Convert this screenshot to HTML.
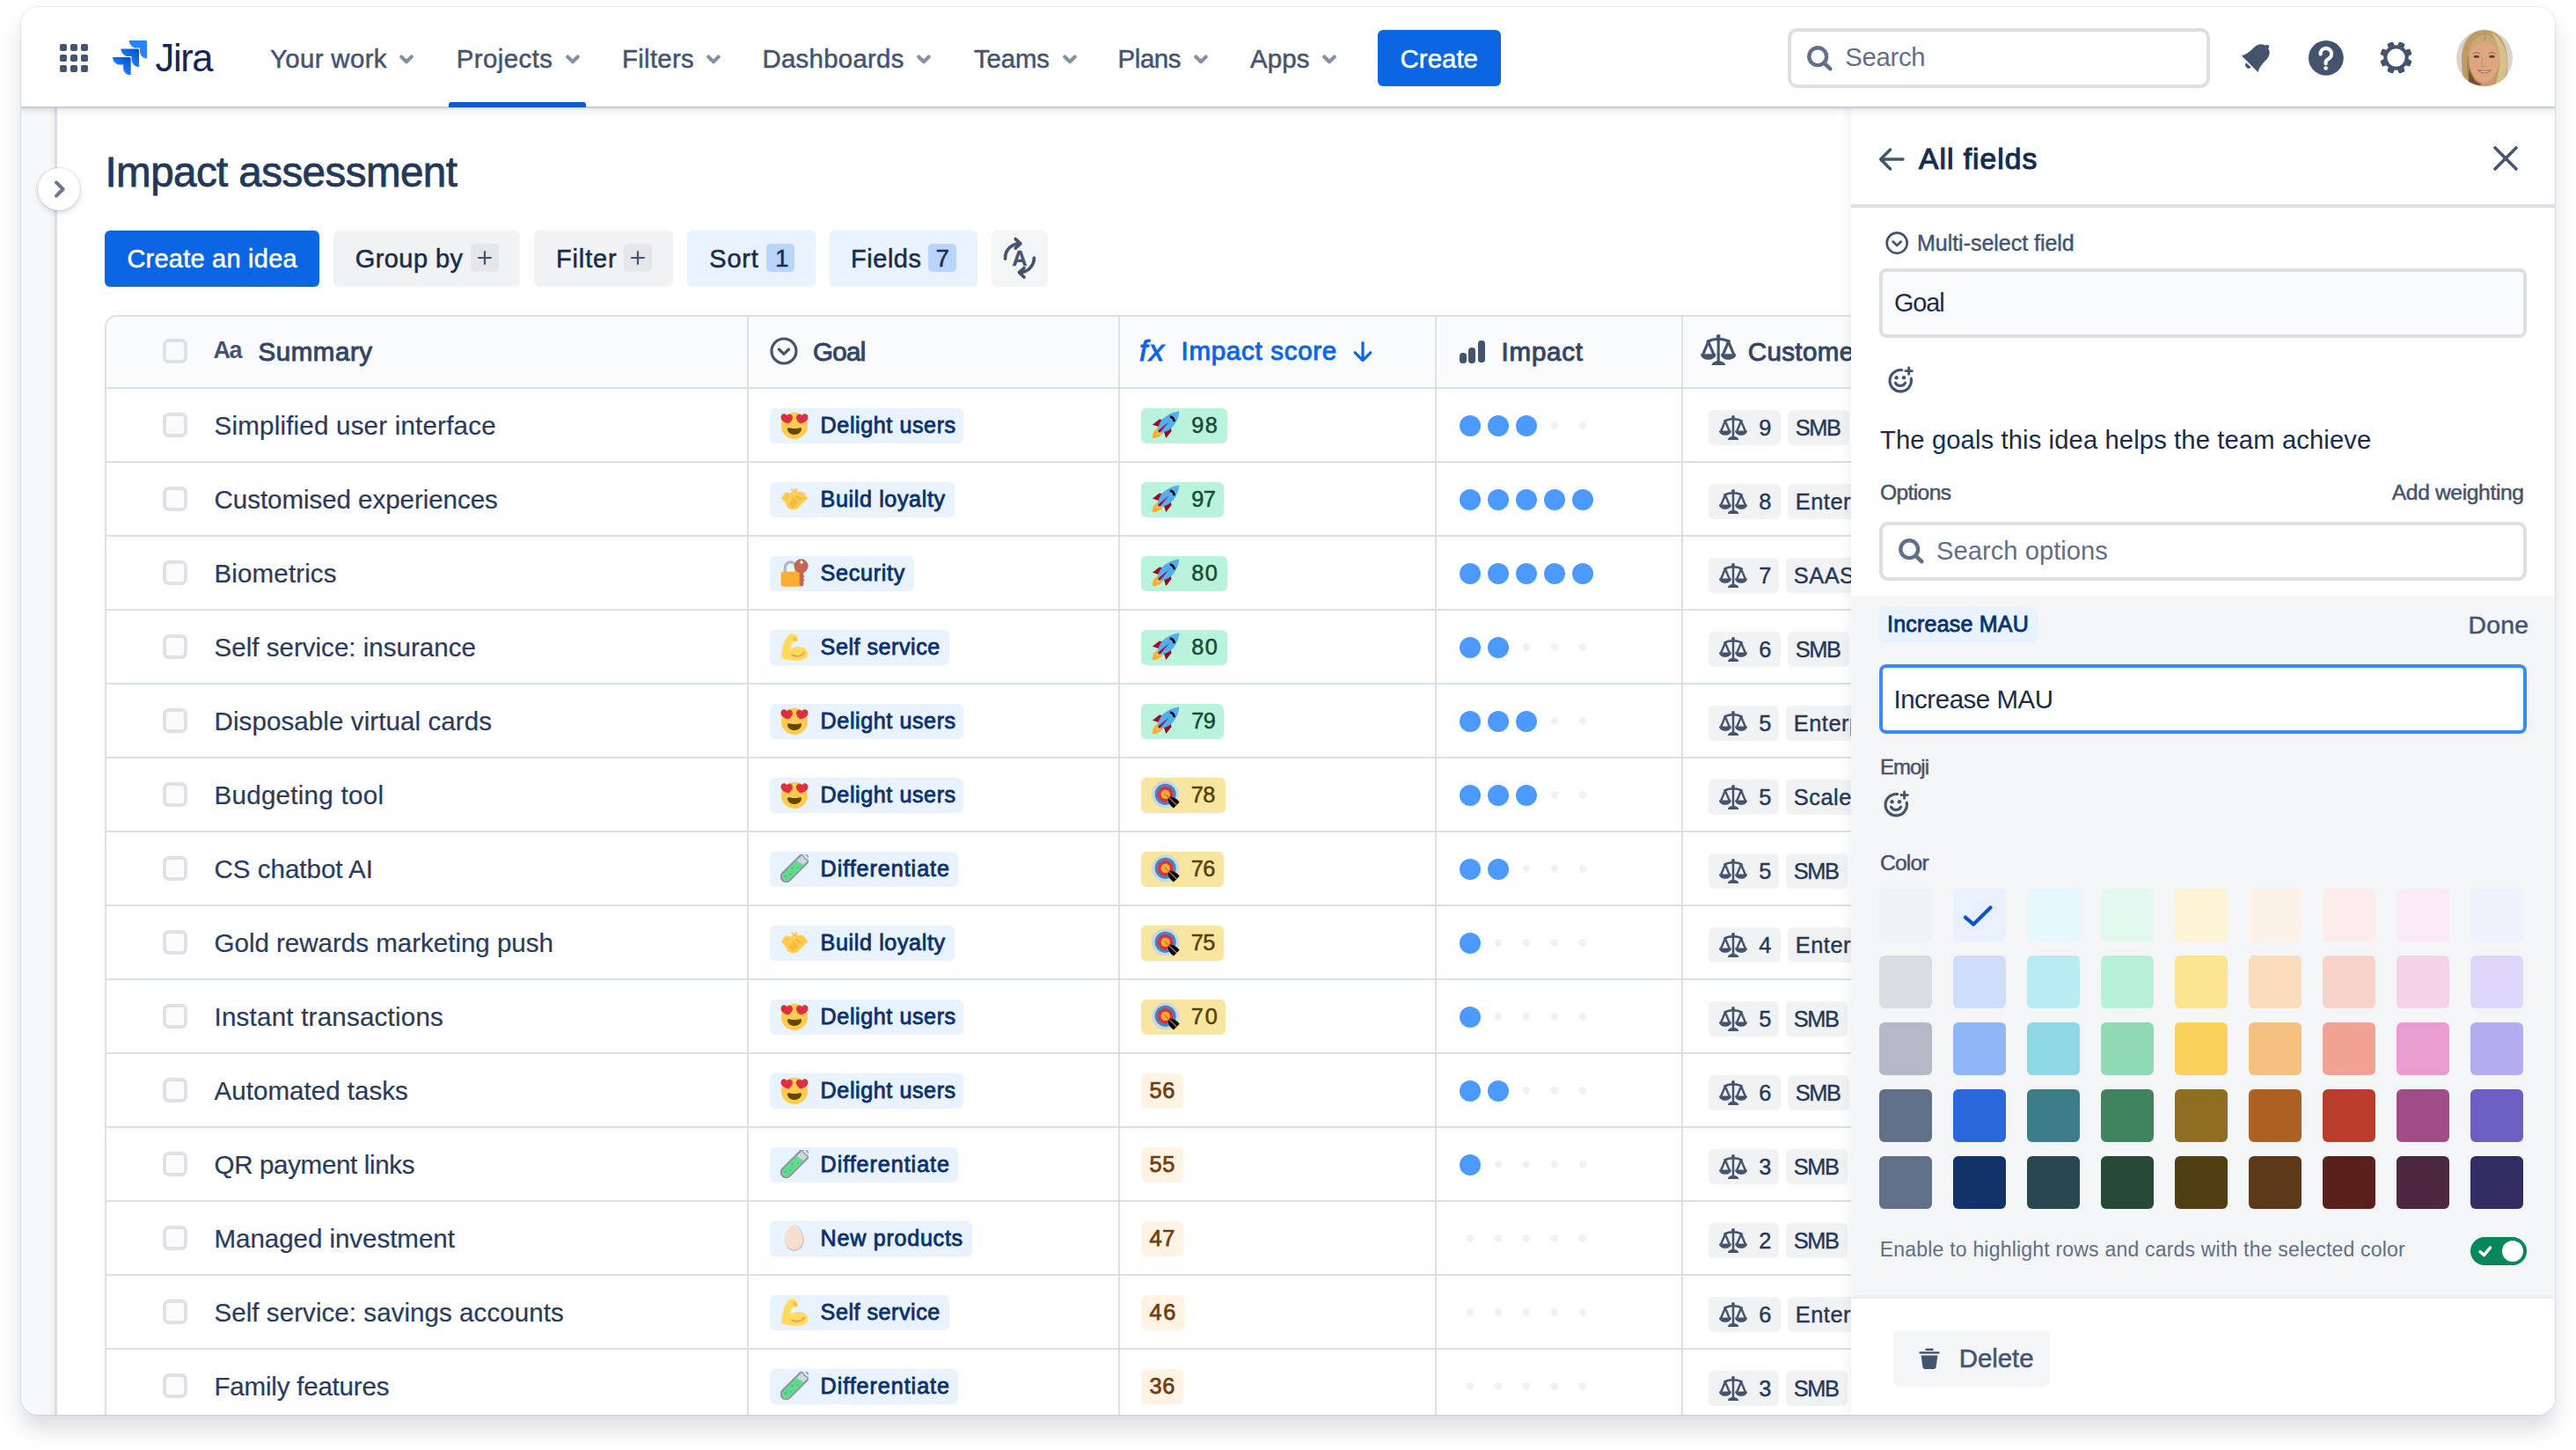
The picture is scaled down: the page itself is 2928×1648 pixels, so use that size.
<!DOCTYPE html>
<html lang="en"><head><meta charset="utf-8"><title>Impact assessment - Jira</title>
<style>
*{box-sizing:border-box;margin:0;padding:0}
h1,h2{font-weight:400;font-size:inherit}
html,body{width:2928px;height:1648px;background:#fff;overflow:hidden}
body{font-family:"Liberation Sans",Arial,sans-serif;color:#172B4D;position:relative}
.b{position:absolute;display:block}
.t{position:absolute;white-space:nowrap;display:block}
#win{position:absolute;left:24px;top:7.5px;width:2880px;height:1600px;border-radius:20px;background:#fff;overflow:hidden;}
#winshadow{position:absolute;left:24px;top:7.5px;width:2880px;height:1600px;border-radius:20px;box-shadow:0 16px 24px rgba(9,30,66,.15),0 0 2px rgba(9,30,66,.31);}
#shift{position:absolute;left:-24px;top:-7.5px;width:2928px;height:1648px}
.cb{position:absolute;width:28px;height:28px;border:4px solid #DFE1E6;border-radius:7px;background:#FAFBFC}
.tag{position:absolute;height:40px;border-radius:6px}
</style></head><body>
<div id="winshadow"></div><div id="win"><div id="shift">
<main>
<div class="b " style="left:24.0px;top:122.0px;width:39.0px;height:1486.0px;background:#F7F8F9;"></div>
<div class="b " style="left:56.0px;top:122.0px;width:7.0px;height:1486.0px;background:linear-gradient(90deg,rgba(9,30,66,0),rgba(9,30,66,.05))"></div>
<div class="b " style="left:62.2px;top:122.0px;width:2.6px;height:1486.0px;background:#DADDE5;"></div>
<div class="b " style="left:43.0px;top:191.0px;width:48.0px;height:48.0px;background:#fff;border-radius:24px;box-shadow:0 0 0 1px rgba(9,30,66,.10),0 3px 6px rgba(9,30,66,.16);"></div>
<svg class="b" style="left:58.0px;top:203.0px;" width="20.0" height="24.0" viewBox="0 0 20 24"><path d="M6 4.4 L13.6 12 L6 19.6" fill="none" stroke="#6B778C" stroke-width="4" stroke-linecap="round" stroke-linejoin="round"/></svg>
<h1><span class="t " style="left:119.5px;top:165.5px;font-size:47.6px;line-height:60px;color:#253858;letter-spacing:-0.60px;-webkit-text-stroke:0.80px #253858;">Impact assessment</span></h1>
<div class="b " style="left:119.0px;top:261.5px;width:244.0px;height:64.0px;background:#0C66E4;border-radius:6px;"></div>
<span class="t " style="left:144.4px;top:275.5px;font-size:29.0px;line-height:36px;color:#fff;letter-spacing:0.23px;-webkit-text-stroke:0.50px #fff;">Create an idea</span>
<div class="b " style="left:379.0px;top:261.5px;width:212.0px;height:64.0px;background:#F1F2F4;border-radius:6px;"></div>
<span class="t " style="left:403.7px;top:275.5px;font-size:29.0px;line-height:36px;color:#172B4D;letter-spacing:0.43px;-webkit-text-stroke:0.50px #172B4D;">Group by</span>
<div class="b " style="left:535.0px;top:277.4px;width:32.0px;height:32.0px;background:#E4E6EA;border-radius:5px;"></div>
<svg class="b" style="left:541.0px;top:283.4px;" width="20.0" height="20.0" viewBox="0 0 20 20"><path d="M10 3 V17 M3 10 H17" stroke="#44546F" stroke-width="2.2" stroke-linecap="round"/></svg>
<div class="b " style="left:607.0px;top:261.5px;width:158.0px;height:64.0px;background:#F1F2F4;border-radius:6px;"></div>
<span class="t " style="left:632.0px;top:275.5px;font-size:29.0px;line-height:36px;color:#172B4D;letter-spacing:0.85px;-webkit-text-stroke:0.50px #172B4D;">Filter</span>
<div class="b " style="left:709.0px;top:277.4px;width:32.0px;height:32.0px;background:#E4E6EA;border-radius:5px;"></div>
<svg class="b" style="left:715.0px;top:283.4px;" width="20.0" height="20.0" viewBox="0 0 20 20"><path d="M10 3 V17 M3 10 H17" stroke="#44546F" stroke-width="2.2" stroke-linecap="round"/></svg>
<div class="b " style="left:781.0px;top:261.5px;width:146.0px;height:64.0px;background:#E9F2FF;border-radius:6px;"></div>
<span class="t " style="left:806.3px;top:275.5px;font-size:29.0px;line-height:36px;color:#172B4D;letter-spacing:0.77px;-webkit-text-stroke:0.50px #172B4D;">Sort</span>
<div class="b " style="left:871.0px;top:277.4px;width:32.0px;height:32.0px;background:#B8D4FF;border-radius:5px;"></div>
<span class="t " style="left:881.0px;top:276.3px;font-size:28.0px;line-height:35px;color:#172B4D;-webkit-text-stroke:0.40px #172B4D;">1</span>
<div class="b " style="left:942.8px;top:261.5px;width:167.8px;height:64.0px;background:#E9F2FF;border-radius:6px;"></div>
<span class="t " style="left:967.0px;top:275.5px;font-size:29.0px;line-height:36px;color:#172B4D;letter-spacing:0.53px;-webkit-text-stroke:0.50px #172B4D;">Fields</span>
<div class="b " style="left:1055.0px;top:277.4px;width:32.0px;height:32.0px;background:#B8D4FF;border-radius:5px;"></div>
<span class="t " style="left:1063.5px;top:276.3px;font-size:28.0px;line-height:35px;color:#172B4D;-webkit-text-stroke:0.40px #172B4D;">7</span>
<div class="b " style="left:1127.0px;top:261.5px;width:64.0px;height:64.0px;background:#F4F5F7;border-radius:6px;"></div>
<svg class="b" style="left:1137.0px;top:268.0px;" width="44.0" height="54.0" viewBox="0 0 44 54"><g fill="none" stroke="#44546F" stroke-width="3.7" stroke-linecap="round" stroke-linejoin="round"><path d="M5.6 26.2 A16.4 16.4 0 0 1 22.4 8.8"/><path d="M17.2 3.7 L22.9 8.9 L17.2 14.1"/><path d="M38.4 25 A16.6 16.6 0 0 1 22 41.7"/><path d="M27 36.6 L21.5 41.7 L27 47"/></g><text x="22" y="33.7" text-anchor="middle" font-family="Liberation Sans,Arial,sans-serif" style="font-weight:700" font-size="23.5" fill="#44546F" stroke="#44546F" stroke-width="0.5">A</text></svg>
<section id="table">
<div class="b " style="left:119.0px;top:358.0px;width:2200.0px;height:1400.0px;background:#fff;border:2px solid #DCDFE4;border-radius:14px 0 0 0;"></div>
<div class="b " style="left:121.0px;top:360.0px;width:2198.0px;height:80.0px;background:#FAFBFC;border-radius:12px 0 0 0;"></div>
<div class="b " style="left:849.4px;top:360.0px;width:2.0px;height:1400.0px;background:#DCDFE4;"></div>
<div class="b " style="left:1271.0px;top:360.0px;width:2.0px;height:1400.0px;background:#DCDFE4;"></div>
<div class="b " style="left:1631.0px;top:360.0px;width:2.0px;height:1400.0px;background:#DCDFE4;"></div>
<div class="b " style="left:1911.0px;top:360.0px;width:2.0px;height:1400.0px;background:#DCDFE4;"></div>
<div class="b " style="left:121.0px;top:440.0px;width:2198.0px;height:2.0px;background:#DCDFE4;"></div>
<div class="b " style="left:121.0px;top:524.0px;width:2198.0px;height:2.0px;background:#DCDFE4;"></div>
<div class="b " style="left:121.0px;top:608.0px;width:2198.0px;height:2.0px;background:#DCDFE4;"></div>
<div class="b " style="left:121.0px;top:692.0px;width:2198.0px;height:2.0px;background:#DCDFE4;"></div>
<div class="b " style="left:121.0px;top:776.0px;width:2198.0px;height:2.0px;background:#DCDFE4;"></div>
<div class="b " style="left:121.0px;top:860.0px;width:2198.0px;height:2.0px;background:#DCDFE4;"></div>
<div class="b " style="left:121.0px;top:944.0px;width:2198.0px;height:2.0px;background:#DCDFE4;"></div>
<div class="b " style="left:121.0px;top:1028.0px;width:2198.0px;height:2.0px;background:#DCDFE4;"></div>
<div class="b " style="left:121.0px;top:1112.0px;width:2198.0px;height:2.0px;background:#DCDFE4;"></div>
<div class="b " style="left:121.0px;top:1196.0px;width:2198.0px;height:2.0px;background:#DCDFE4;"></div>
<div class="b " style="left:121.0px;top:1280.0px;width:2198.0px;height:2.0px;background:#DCDFE4;"></div>
<div class="b " style="left:121.0px;top:1364.0px;width:2198.0px;height:2.0px;background:#DCDFE4;"></div>
<div class="b " style="left:121.0px;top:1448.0px;width:2198.0px;height:2.0px;background:#DCDFE4;"></div>
<div class="b " style="left:121.0px;top:1532.0px;width:2198.0px;height:2.0px;background:#DCDFE4;"></div>
<div class="b " style="left:121.0px;top:1616.0px;width:2198.0px;height:2.0px;background:#DCDFE4;"></div>
<div class="cb" style="left:185px;top:385px"></div>
<span class="t " style="left:242.5px;top:381.1px;font-size:27.0px;line-height:34px;color:#44546F;letter-spacing:-1.52px;font-weight:700;">Aa</span>
<span class="t " style="left:293.5px;top:380.6px;font-size:29.5px;line-height:37px;color:#344563;letter-spacing:0.55px;-webkit-text-stroke:0.97px #344563;">Summary</span>
<svg class="b" style="left:874.8px;top:382.8px;" width="32.0" height="32.0" viewBox="0 0 32 32"><circle cx="16" cy="16" r="14" fill="none" stroke="#44546F" stroke-width="3.2"/><path d="M10.4 14 L16 19.4 L21.6 14" fill="none" stroke="#44546F" stroke-width="3.2" stroke-linecap="round" stroke-linejoin="round"/></svg>
<span class="t " style="left:924.0px;top:380.6px;font-size:29.5px;line-height:37px;color:#344563;letter-spacing:-0.64px;-webkit-text-stroke:0.97px #344563;">Goal</span>
<span class="t " style="left:1295.0px;top:376.8px;font-size:34.0px;line-height:42px;color:#0C66E4;letter-spacing:1.55px;font-style:italic;-webkit-text-stroke:1.00px #0C66E4;">fx</span>
<span class="t " style="left:1342.5px;top:380.3px;font-size:29.5px;line-height:37px;color:#0C66E4;letter-spacing:0.72px;-webkit-text-stroke:0.97px #0C66E4;">Impact score</span>
<svg class="b" style="left:1536.0px;top:385.5px;" width="26.0" height="28.0" viewBox="0 0 26 28"><path d="M13 3.6 V23.4 M4.2 14.8 L13 23.6 L21.8 14.8" fill="none" stroke="#0C66E4" stroke-width="3.2" stroke-linecap="round" stroke-linejoin="round"/></svg>
<div class="b " style="left:1659.0px;top:401.0px;width:8.0px;height:11.5px;background:#44546F;border-radius:3.5px;"></div>
<div class="b " style="left:1669.3px;top:394.6px;width:8.0px;height:18.0px;background:#44546F;border-radius:3.5px;"></div>
<div class="b " style="left:1679.6px;top:387.4px;width:8.0px;height:25.0px;background:#44546F;border-radius:3.5px;"></div>
<span class="t " style="left:1706.6px;top:380.6px;font-size:29.5px;line-height:37px;color:#344563;letter-spacing:0.77px;-webkit-text-stroke:0.97px #344563;">Impact</span>
<svg class="b" style="left:1932.6px;top:379.6px;" width="40.4" height="35.8" viewBox="0 0 32.2 28.4"><g fill="none" stroke="#44546F" stroke-width="2.5" stroke-linecap="round" stroke-linejoin="round"><path d="M16.1 2 V25.4"/><path d="M6.4 6.3 C9.6 4.7 12.8 4.1 16.1 4.1 C19.4 4.1 22.6 4.7 25.8 6.3"/><path d="M7 6.6 L2.2 18 M7 6.6 L11.8 18"/><path d="M25.2 6.6 L20.4 18 M25.2 6.6 L30 18"/></g><circle cx="16.1" cy="1.9" r="1.9" fill="#44546F"/><path d="M0 17.6 H14 C14 20.8 10.8 22.9 7 22.9 C3.2 22.9 0 20.8 0 17.6 Z" fill="#44546F"/><path d="M18.2 17.6 H32.2 C32.2 20.8 29 22.9 25.2 22.9 C21.4 22.9 18.2 20.8 18.2 17.6 Z" fill="#44546F"/><path d="M10 28.4 C10 25.6 12.8 24.1 16.1 24.1 C19.4 24.1 22.4 25.6 22.4 28.4 Z" fill="#44546F"/></svg>
<span class="t " style="left:1986.7px;top:380.6px;font-size:29.5px;line-height:37px;color:#344563;-webkit-text-stroke:0.97px #344563;letter-spacing:0.4px;">Customer segment</span>
<div class="row">
<div class="cb" style="left:185px;top:469.0px"></div>
<span class="t " style="left:243.5px;top:464.9px;font-size:29.6px;line-height:37px;color:#2A3B5B;letter-spacing:0.18px;-webkit-text-stroke:0.20px #2A3B5B;">Simplified user interface</span>
<div class="b " style="left:875.0px;top:463.5px;width:220.0px;height:40.0px;background:#E9F2FF;border-radius:6px;"></div>
<svg role="img" aria-label="😍" class="b" style="left:887.0px;top:467.1px;" width="32.0" height="32.0" viewBox="0 0 36 36"><circle cx="18" cy="19" r="17" fill="#FFCC4D"/><path d="M18 22.6c-3 0-5-.35-7.4-.82-.56-.1-1.64 0-1.64 1.64 0 3.28 3.76 7.0 9.04 7.0s9.04-3.72 9.04-7.0c0-1.64-1.08-1.75-1.64-1.64-2.4.47-4.4.82-7.4.82z" fill="#664500"/><path d="M16.2 4.6c-1.2-3.2-4.8-4.6-7.8-3.4-2.4.9-3.8 3.2-3.9 5.6-1.9-1.4-4.6-1.6-6.6 0" fill="none"/><path d="M9.6 16.4 C4.4 14.6 0.6 11.2 0.9 7.2 C1.1 4.4 3.6 2.6 6.1 3.3 C7.5 3.7 8.5 4.7 8.9 6 C9.9 5 11.3 4.3 12.8 4.7 C15.3 5.3 16.6 8.1 15.5 10.7 C14.4 13.3 12.2 15.2 9.6 16.4 Z" fill="#DD2E44" transform="rotate(-8 9 10)"/><path d="M26.4 16.4 C31.6 14.6 35.4 11.2 35.1 7.2 C34.9 4.4 32.4 2.6 29.9 3.3 C28.5 3.7 27.5 4.7 27.1 6 C26.1 5 24.7 4.3 23.2 4.7 C20.7 5.3 19.4 8.1 20.5 10.7 C21.6 13.3 23.8 15.2 26.4 16.4 Z" fill="#DD2E44" transform="rotate(8 27 10)"/></svg>
<span class="t " style="left:932.6px;top:467.0px;font-size:25.2px;line-height:32px;color:#09326C;letter-spacing:0.55px;-webkit-text-stroke:0.83px #09326C;">Delight users</span>
<div class="b " style="left:1297.0px;top:463.5px;width:98.0px;height:40.0px;background:#BAF3DB;border-radius:6px;"></div>
<svg role="img" aria-label="🚀" class="b" style="left:1309.4px;top:467.0px;" width="32.0" height="32.0" viewBox="0 0 36 36"><path d="M1 35 C0.6 29.6 3.4 23.6 8.6 21.6 L14.6 27.6 C12.4 32.6 6.6 35.4 1 35 Z" fill="#FFAC33"/><path d="M6.2 29.8 C6 26.6 7.6 23.6 10.4 22.4 L13.8 25.8 C12.6 28.6 9.4 30.2 6.2 29.8 Z" fill="#FFCC4D"/><path d="M1 17.6 L10 10.6 L16 12 L10 20.6 Z" fill="#A0041E"/><path d="M18.4 35 L25.4 26 L24 20 L15.4 26 Z" fill="#A0041E"/><path d="M35.4 0.6 C35.4 0.6 21.4 1.4 12.6 12.2 C8 17.8 7.6 24.2 8.6 27.4 C11.8 28.4 18.2 28 23.8 23.4 C34.6 14.6 35.4 0.6 35.4 0.6 Z" fill="#55ACEE"/><path d="M22.6 13.4 L8.4 25.4 C8.4 26.2 8.5 26.9 8.6 27.4 C9.1 27.5 9.8 27.6 10.6 27.6 Z" fill="#A0041E"/><path d="M23.4 7.4 C26.8 7.6 29 10.4 28.6 13.6" fill="none" stroke="#000" stroke-width="3" stroke-linecap="butt"/></svg>
<span class="t " style="left:1354.2px;top:467.3px;font-size:25.4px;line-height:32px;color:#164B35;letter-spacing:1.55px;-webkit-text-stroke:0.50px #164B35;">98</span>
<div class="b " style="left:1659.0px;top:471.5px;width:24.0px;height:24.0px;background:#4C9AFF;border-radius:12px;"></div>
<div class="b " style="left:1691.0px;top:471.5px;width:24.0px;height:24.0px;background:#4C9AFF;border-radius:12px;"></div>
<div class="b " style="left:1723.0px;top:471.5px;width:24.0px;height:24.0px;background:#4C9AFF;border-radius:12px;"></div>
<div class="b " style="left:1762.8px;top:479.3px;width:8.4px;height:8.4px;background:#F0F1F4;border-radius:5px;"></div>
<div class="b " style="left:1794.8px;top:479.3px;width:8.4px;height:8.4px;background:#F0F1F4;border-radius:5px;"></div>
<div class="b " style="left:1942.0px;top:466.0px;width:82.0px;height:40.0px;background:#F1F2F4;border-radius:6px;"></div>
<svg class="b" style="left:1954.0px;top:471.9px;" width="32.0" height="28.4" viewBox="0 0 32.2 28.4"><g fill="none" stroke="#44546F" stroke-width="2.5" stroke-linecap="round" stroke-linejoin="round"><path d="M16.1 2 V25.4"/><path d="M6.4 6.3 C9.6 4.7 12.8 4.1 16.1 4.1 C19.4 4.1 22.6 4.7 25.8 6.3"/><path d="M7 6.6 L2.2 18 M7 6.6 L11.8 18"/><path d="M25.2 6.6 L20.4 18 M25.2 6.6 L30 18"/></g><circle cx="16.1" cy="1.9" r="1.9" fill="#44546F"/><path d="M0 17.6 H14 C14 20.8 10.8 22.9 7 22.9 C3.2 22.9 0 20.8 0 17.6 Z" fill="#44546F"/><path d="M18.2 17.6 H32.2 C32.2 20.8 29 22.9 25.2 22.9 C21.4 22.9 18.2 20.8 18.2 17.6 Z" fill="#44546F"/><path d="M10 28.4 C10 25.6 12.8 24.1 16.1 24.1 C19.4 24.1 22.4 25.6 22.4 28.4 Z" fill="#44546F"/></svg>
<span class="t " style="left:1999.2px;top:469.7px;font-size:25.4px;line-height:32px;color:#253858;-webkit-text-stroke:0.40px #253858;">9</span>
<div class="b " style="left:2032.0px;top:466.0px;width:70.0px;height:40.0px;background:#F1F2F4;border-radius:6px;"></div>
<span class="t " style="left:2040.8px;top:469.7px;font-size:25.4px;line-height:32px;color:#253858;letter-spacing:-1.42px;-webkit-text-stroke:0.40px #253858;">SMB</span>
</div>
<div class="row">
<div class="cb" style="left:185px;top:553.0px"></div>
<span class="t " style="left:243.5px;top:548.9px;font-size:29.6px;line-height:37px;color:#2A3B5B;letter-spacing:-0.08px;-webkit-text-stroke:0.20px #2A3B5B;">Customised experiences</span>
<div class="b " style="left:875.0px;top:547.5px;width:210.0px;height:40.0px;background:#E9F2FF;border-radius:6px;"></div>
<svg role="img" aria-label="🤝" class="b" style="left:887.0px;top:551.1px;" width="32.0" height="32.0" viewBox="0 0 36 36"><path d="M1 17.5 L6.5 9.5 L13 11 L17 7.5 L21.5 9.5 L25 8.5 L30 9.8 L35.2 17.8 L30.5 21.5 L22 30.5 C21 31.6 19.6 31.8 18.6 31 C17.6 32 16 32.2 15 31.2 C13.8 31.8 12.4 31.4 11.8 30.2 C10.6 30.6 9.4 30 9 28.8 L5.5 22 Z" fill="#FFCC4D"/><path d="M15 4.2 L17.6 7.2 L20.2 3.8 L22 6 L20.4 9.6 L16 9.4 L13.6 6 Z" fill="#FFCC4D"/><path d="M18 12.4 L25.8 18.6 M14 21 L19 25.6 M12.4 24 L16.6 28 M16.4 18.4 L22 23.4" stroke="#F4A72A" stroke-width="1.5" stroke-linecap="round" fill="none"/><path d="M17.4 10.6 L20 12.6 L17.8 13.6 Z" fill="#E9F2FF"/></svg>
<span class="t " style="left:932.6px;top:551.0px;font-size:25.2px;line-height:32px;color:#09326C;letter-spacing:0.59px;-webkit-text-stroke:0.83px #09326C;">Build loyalty</span>
<div class="b " style="left:1297.0px;top:547.5px;width:94.0px;height:40.0px;background:#BAF3DB;border-radius:6px;"></div>
<svg role="img" aria-label="🚀" class="b" style="left:1309.4px;top:551.0px;" width="32.0" height="32.0" viewBox="0 0 36 36"><path d="M1 35 C0.6 29.6 3.4 23.6 8.6 21.6 L14.6 27.6 C12.4 32.6 6.6 35.4 1 35 Z" fill="#FFAC33"/><path d="M6.2 29.8 C6 26.6 7.6 23.6 10.4 22.4 L13.8 25.8 C12.6 28.6 9.4 30.2 6.2 29.8 Z" fill="#FFCC4D"/><path d="M1 17.6 L10 10.6 L16 12 L10 20.6 Z" fill="#A0041E"/><path d="M18.4 35 L25.4 26 L24 20 L15.4 26 Z" fill="#A0041E"/><path d="M35.4 0.6 C35.4 0.6 21.4 1.4 12.6 12.2 C8 17.8 7.6 24.2 8.6 27.4 C11.8 28.4 18.2 28 23.8 23.4 C34.6 14.6 35.4 0.6 35.4 0.6 Z" fill="#55ACEE"/><path d="M22.6 13.4 L8.4 25.4 C8.4 26.2 8.5 26.9 8.6 27.4 C9.1 27.5 9.8 27.6 10.6 27.6 Z" fill="#A0041E"/><path d="M23.4 7.4 C26.8 7.6 29 10.4 28.6 13.6" fill="none" stroke="#000" stroke-width="3" stroke-linecap="butt"/></svg>
<span class="t " style="left:1354.2px;top:551.3px;font-size:25.4px;line-height:32px;color:#164B35;letter-spacing:-0.45px;-webkit-text-stroke:0.50px #164B35;">97</span>
<div class="b " style="left:1659.0px;top:555.5px;width:24.0px;height:24.0px;background:#4C9AFF;border-radius:12px;"></div>
<div class="b " style="left:1691.0px;top:555.5px;width:24.0px;height:24.0px;background:#4C9AFF;border-radius:12px;"></div>
<div class="b " style="left:1723.0px;top:555.5px;width:24.0px;height:24.0px;background:#4C9AFF;border-radius:12px;"></div>
<div class="b " style="left:1755.0px;top:555.5px;width:24.0px;height:24.0px;background:#4C9AFF;border-radius:12px;"></div>
<div class="b " style="left:1787.0px;top:555.5px;width:24.0px;height:24.0px;background:#4C9AFF;border-radius:12px;"></div>
<div class="b " style="left:1942.0px;top:550.0px;width:82.0px;height:40.0px;background:#F1F2F4;border-radius:6px;"></div>
<svg class="b" style="left:1954.0px;top:555.9px;" width="32.0" height="28.4" viewBox="0 0 32.2 28.4"><g fill="none" stroke="#44546F" stroke-width="2.5" stroke-linecap="round" stroke-linejoin="round"><path d="M16.1 2 V25.4"/><path d="M6.4 6.3 C9.6 4.7 12.8 4.1 16.1 4.1 C19.4 4.1 22.6 4.7 25.8 6.3"/><path d="M7 6.6 L2.2 18 M7 6.6 L11.8 18"/><path d="M25.2 6.6 L20.4 18 M25.2 6.6 L30 18"/></g><circle cx="16.1" cy="1.9" r="1.9" fill="#44546F"/><path d="M0 17.6 H14 C14 20.8 10.8 22.9 7 22.9 C3.2 22.9 0 20.8 0 17.6 Z" fill="#44546F"/><path d="M18.2 17.6 H32.2 C32.2 20.8 29 22.9 25.2 22.9 C21.4 22.9 18.2 20.8 18.2 17.6 Z" fill="#44546F"/><path d="M10 28.4 C10 25.6 12.8 24.1 16.1 24.1 C19.4 24.1 22.4 25.6 22.4 28.4 Z" fill="#44546F"/></svg>
<span class="t " style="left:1999.2px;top:553.7px;font-size:25.4px;line-height:32px;color:#253858;-webkit-text-stroke:0.40px #253858;">8</span>
<div class="b " style="left:2032.0px;top:550.0px;width:200.0px;height:40.0px;background:#F1F2F4;border-radius:6px;"></div>
<span class="t " style="left:2040.8px;top:553.7px;font-size:25.4px;line-height:32px;color:#253858;-webkit-text-stroke:0.40px #253858;letter-spacing:0.5px;">Enterprise</span>
</div>
<div class="row">
<div class="cb" style="left:185px;top:637.0px"></div>
<span class="t " style="left:243.5px;top:632.9px;font-size:29.6px;line-height:37px;color:#2A3B5B;letter-spacing:0.10px;-webkit-text-stroke:0.20px #2A3B5B;">Biometrics</span>
<div class="b " style="left:875.0px;top:631.5px;width:164.0px;height:40.0px;background:#E9F2FF;border-radius:6px;"></div>
<svg role="img" aria-label="🔐" class="b" style="left:887.0px;top:635.1px;" width="32.0" height="32.0" viewBox="0 0 36 36"><path d="M6 17 V11.5 C6 7 9.2 4.4 13 4.4 C16.8 4.4 20 7 20 11.5 V17" fill="none" stroke="#AAB8C2" stroke-width="3.6"/><rect x="0.8" y="16.6" width="26" height="19" rx="3.2" fill="#FFAC33"/><circle cx="26.6" cy="9.4" r="9" fill="#C1694F"/><path d="M24.4 17 H29.6 V21.2 L31 22.4 L29.6 24 V26 L31 27.4 L29.6 29 V33.4 L27.4 35.6 L24.4 34 Z" fill="#C1694F"/><circle cx="27" cy="4.6" r="2" fill="#fff"/></svg>
<span class="t " style="left:932.6px;top:635.0px;font-size:25.2px;line-height:32px;color:#09326C;letter-spacing:0.68px;-webkit-text-stroke:0.83px #09326C;">Security</span>
<div class="b " style="left:1297.0px;top:631.5px;width:98.0px;height:40.0px;background:#BAF3DB;border-radius:6px;"></div>
<svg role="img" aria-label="🚀" class="b" style="left:1309.4px;top:635.0px;" width="32.0" height="32.0" viewBox="0 0 36 36"><path d="M1 35 C0.6 29.6 3.4 23.6 8.6 21.6 L14.6 27.6 C12.4 32.6 6.6 35.4 1 35 Z" fill="#FFAC33"/><path d="M6.2 29.8 C6 26.6 7.6 23.6 10.4 22.4 L13.8 25.8 C12.6 28.6 9.4 30.2 6.2 29.8 Z" fill="#FFCC4D"/><path d="M1 17.6 L10 10.6 L16 12 L10 20.6 Z" fill="#A0041E"/><path d="M18.4 35 L25.4 26 L24 20 L15.4 26 Z" fill="#A0041E"/><path d="M35.4 0.6 C35.4 0.6 21.4 1.4 12.6 12.2 C8 17.8 7.6 24.2 8.6 27.4 C11.8 28.4 18.2 28 23.8 23.4 C34.6 14.6 35.4 0.6 35.4 0.6 Z" fill="#55ACEE"/><path d="M22.6 13.4 L8.4 25.4 C8.4 26.2 8.5 26.9 8.6 27.4 C9.1 27.5 9.8 27.6 10.6 27.6 Z" fill="#A0041E"/><path d="M23.4 7.4 C26.8 7.6 29 10.4 28.6 13.6" fill="none" stroke="#000" stroke-width="3" stroke-linecap="butt"/></svg>
<span class="t " style="left:1354.2px;top:635.3px;font-size:25.4px;line-height:32px;color:#164B35;letter-spacing:1.55px;-webkit-text-stroke:0.50px #164B35;">80</span>
<div class="b " style="left:1659.0px;top:639.5px;width:24.0px;height:24.0px;background:#4C9AFF;border-radius:12px;"></div>
<div class="b " style="left:1691.0px;top:639.5px;width:24.0px;height:24.0px;background:#4C9AFF;border-radius:12px;"></div>
<div class="b " style="left:1723.0px;top:639.5px;width:24.0px;height:24.0px;background:#4C9AFF;border-radius:12px;"></div>
<div class="b " style="left:1755.0px;top:639.5px;width:24.0px;height:24.0px;background:#4C9AFF;border-radius:12px;"></div>
<div class="b " style="left:1787.0px;top:639.5px;width:24.0px;height:24.0px;background:#4C9AFF;border-radius:12px;"></div>
<div class="b " style="left:1942.0px;top:634.0px;width:80.0px;height:40.0px;background:#F1F2F4;border-radius:6px;"></div>
<svg class="b" style="left:1954.0px;top:639.9px;" width="32.0" height="28.4" viewBox="0 0 32.2 28.4"><g fill="none" stroke="#44546F" stroke-width="2.5" stroke-linecap="round" stroke-linejoin="round"><path d="M16.1 2 V25.4"/><path d="M6.4 6.3 C9.6 4.7 12.8 4.1 16.1 4.1 C19.4 4.1 22.6 4.7 25.8 6.3"/><path d="M7 6.6 L2.2 18 M7 6.6 L11.8 18"/><path d="M25.2 6.6 L20.4 18 M25.2 6.6 L30 18"/></g><circle cx="16.1" cy="1.9" r="1.9" fill="#44546F"/><path d="M0 17.6 H14 C14 20.8 10.8 22.9 7 22.9 C3.2 22.9 0 20.8 0 17.6 Z" fill="#44546F"/><path d="M18.2 17.6 H32.2 C32.2 20.8 29 22.9 25.2 22.9 C21.4 22.9 18.2 20.8 18.2 17.6 Z" fill="#44546F"/><path d="M10 28.4 C10 25.6 12.8 24.1 16.1 24.1 C19.4 24.1 22.4 25.6 22.4 28.4 Z" fill="#44546F"/></svg>
<span class="t " style="left:1999.2px;top:637.7px;font-size:25.4px;line-height:32px;color:#253858;-webkit-text-stroke:0.40px #253858;">7</span>
<div class="b " style="left:2030.0px;top:634.0px;width:200.0px;height:40.0px;background:#F1F2F4;border-radius:6px;"></div>
<span class="t " style="left:2038.8px;top:637.7px;font-size:25.4px;line-height:32px;color:#253858;-webkit-text-stroke:0.40px #253858;letter-spacing:0.5px;">SAAS</span>
</div>
<div class="row">
<div class="cb" style="left:185px;top:721.0px"></div>
<span class="t " style="left:243.5px;top:716.9px;font-size:29.6px;line-height:37px;color:#2A3B5B;letter-spacing:-0.01px;-webkit-text-stroke:0.20px #2A3B5B;">Self service: insurance</span>
<div class="b " style="left:875.0px;top:715.5px;width:204.0px;height:40.0px;background:#E9F2FF;border-radius:6px;"></div>
<svg role="img" aria-label="💪" class="b" style="left:887.0px;top:719.1px;" width="32.0" height="32.0" viewBox="0 0 36 36"><path d="M14.6 0.8 C17 1.6 19.6 2.6 21.4 4 C22.4 4.8 22.4 6 21.8 7 L22.6 9.2 L21.4 12.2 C20 12.4 18.4 12 17.2 11.2 C14.6 13 13 17 13.2 21.4 C16.4 18.6 21.4 17.4 26.4 18.2 C32 19.2 35.4 23 35.4 27.4 C35.4 32 31.6 34.8 26 35.4 C20 36 10 36.2 1.6 32.6 C1.2 24 3 13.6 8.2 6 C9.8 3.6 12 1.4 14.6 0.8 Z" fill="#FFDC5D"/><path d="M15 28.4 C19.6 31.6 27.6 30.6 30.6 25.2" fill="none" stroke="#EF9645" stroke-width="1.8" stroke-linecap="round"/><path d="M16.6 6.4 L19.8 7.4 M18 9.2 L20.6 9.4" stroke="#EF9645" stroke-width="1.2" stroke-linecap="round"/></svg>
<span class="t " style="left:932.6px;top:719.0px;font-size:25.2px;line-height:32px;color:#09326C;letter-spacing:0.50px;-webkit-text-stroke:0.83px #09326C;">Self service</span>
<div class="b " style="left:1297.0px;top:715.5px;width:98.0px;height:40.0px;background:#BAF3DB;border-radius:6px;"></div>
<svg role="img" aria-label="🚀" class="b" style="left:1309.4px;top:719.0px;" width="32.0" height="32.0" viewBox="0 0 36 36"><path d="M1 35 C0.6 29.6 3.4 23.6 8.6 21.6 L14.6 27.6 C12.4 32.6 6.6 35.4 1 35 Z" fill="#FFAC33"/><path d="M6.2 29.8 C6 26.6 7.6 23.6 10.4 22.4 L13.8 25.8 C12.6 28.6 9.4 30.2 6.2 29.8 Z" fill="#FFCC4D"/><path d="M1 17.6 L10 10.6 L16 12 L10 20.6 Z" fill="#A0041E"/><path d="M18.4 35 L25.4 26 L24 20 L15.4 26 Z" fill="#A0041E"/><path d="M35.4 0.6 C35.4 0.6 21.4 1.4 12.6 12.2 C8 17.8 7.6 24.2 8.6 27.4 C11.8 28.4 18.2 28 23.8 23.4 C34.6 14.6 35.4 0.6 35.4 0.6 Z" fill="#55ACEE"/><path d="M22.6 13.4 L8.4 25.4 C8.4 26.2 8.5 26.9 8.6 27.4 C9.1 27.5 9.8 27.6 10.6 27.6 Z" fill="#A0041E"/><path d="M23.4 7.4 C26.8 7.6 29 10.4 28.6 13.6" fill="none" stroke="#000" stroke-width="3" stroke-linecap="butt"/></svg>
<span class="t " style="left:1354.2px;top:719.3px;font-size:25.4px;line-height:32px;color:#164B35;letter-spacing:1.55px;-webkit-text-stroke:0.50px #164B35;">80</span>
<div class="b " style="left:1659.0px;top:723.5px;width:24.0px;height:24.0px;background:#4C9AFF;border-radius:12px;"></div>
<div class="b " style="left:1691.0px;top:723.5px;width:24.0px;height:24.0px;background:#4C9AFF;border-radius:12px;"></div>
<div class="b " style="left:1730.8px;top:731.3px;width:8.4px;height:8.4px;background:#F0F1F4;border-radius:5px;"></div>
<div class="b " style="left:1762.8px;top:731.3px;width:8.4px;height:8.4px;background:#F0F1F4;border-radius:5px;"></div>
<div class="b " style="left:1794.8px;top:731.3px;width:8.4px;height:8.4px;background:#F0F1F4;border-radius:5px;"></div>
<div class="b " style="left:1942.0px;top:718.0px;width:82.0px;height:40.0px;background:#F1F2F4;border-radius:6px;"></div>
<svg class="b" style="left:1954.0px;top:723.9px;" width="32.0" height="28.4" viewBox="0 0 32.2 28.4"><g fill="none" stroke="#44546F" stroke-width="2.5" stroke-linecap="round" stroke-linejoin="round"><path d="M16.1 2 V25.4"/><path d="M6.4 6.3 C9.6 4.7 12.8 4.1 16.1 4.1 C19.4 4.1 22.6 4.7 25.8 6.3"/><path d="M7 6.6 L2.2 18 M7 6.6 L11.8 18"/><path d="M25.2 6.6 L20.4 18 M25.2 6.6 L30 18"/></g><circle cx="16.1" cy="1.9" r="1.9" fill="#44546F"/><path d="M0 17.6 H14 C14 20.8 10.8 22.9 7 22.9 C3.2 22.9 0 20.8 0 17.6 Z" fill="#44546F"/><path d="M18.2 17.6 H32.2 C32.2 20.8 29 22.9 25.2 22.9 C21.4 22.9 18.2 20.8 18.2 17.6 Z" fill="#44546F"/><path d="M10 28.4 C10 25.6 12.8 24.1 16.1 24.1 C19.4 24.1 22.4 25.6 22.4 28.4 Z" fill="#44546F"/></svg>
<span class="t " style="left:1999.2px;top:721.7px;font-size:25.4px;line-height:32px;color:#253858;-webkit-text-stroke:0.40px #253858;">6</span>
<div class="b " style="left:2032.0px;top:718.0px;width:70.0px;height:40.0px;background:#F1F2F4;border-radius:6px;"></div>
<span class="t " style="left:2040.8px;top:721.7px;font-size:25.4px;line-height:32px;color:#253858;letter-spacing:-1.42px;-webkit-text-stroke:0.40px #253858;">SMB</span>
</div>
<div class="row">
<div class="cb" style="left:185px;top:805.0px"></div>
<span class="t " style="left:243.5px;top:800.9px;font-size:29.6px;line-height:37px;color:#2A3B5B;letter-spacing:0.06px;-webkit-text-stroke:0.20px #2A3B5B;">Disposable virtual cards</span>
<div class="b " style="left:875.0px;top:799.5px;width:220.0px;height:40.0px;background:#E9F2FF;border-radius:6px;"></div>
<svg role="img" aria-label="😍" class="b" style="left:887.0px;top:803.1px;" width="32.0" height="32.0" viewBox="0 0 36 36"><circle cx="18" cy="19" r="17" fill="#FFCC4D"/><path d="M18 22.6c-3 0-5-.35-7.4-.82-.56-.1-1.64 0-1.64 1.64 0 3.28 3.76 7.0 9.04 7.0s9.04-3.72 9.04-7.0c0-1.64-1.08-1.75-1.64-1.64-2.4.47-4.4.82-7.4.82z" fill="#664500"/><path d="M16.2 4.6c-1.2-3.2-4.8-4.6-7.8-3.4-2.4.9-3.8 3.2-3.9 5.6-1.9-1.4-4.6-1.6-6.6 0" fill="none"/><path d="M9.6 16.4 C4.4 14.6 0.6 11.2 0.9 7.2 C1.1 4.4 3.6 2.6 6.1 3.3 C7.5 3.7 8.5 4.7 8.9 6 C9.9 5 11.3 4.3 12.8 4.7 C15.3 5.3 16.6 8.1 15.5 10.7 C14.4 13.3 12.2 15.2 9.6 16.4 Z" fill="#DD2E44" transform="rotate(-8 9 10)"/><path d="M26.4 16.4 C31.6 14.6 35.4 11.2 35.1 7.2 C34.9 4.4 32.4 2.6 29.9 3.3 C28.5 3.7 27.5 4.7 27.1 6 C26.1 5 24.7 4.3 23.2 4.7 C20.7 5.3 19.4 8.1 20.5 10.7 C21.6 13.3 23.8 15.2 26.4 16.4 Z" fill="#DD2E44" transform="rotate(8 27 10)"/></svg>
<span class="t " style="left:932.6px;top:803.0px;font-size:25.2px;line-height:32px;color:#09326C;letter-spacing:0.55px;-webkit-text-stroke:0.83px #09326C;">Delight users</span>
<div class="b " style="left:1297.0px;top:799.5px;width:94.0px;height:40.0px;background:#BAF3DB;border-radius:6px;"></div>
<svg role="img" aria-label="🚀" class="b" style="left:1309.4px;top:803.0px;" width="32.0" height="32.0" viewBox="0 0 36 36"><path d="M1 35 C0.6 29.6 3.4 23.6 8.6 21.6 L14.6 27.6 C12.4 32.6 6.6 35.4 1 35 Z" fill="#FFAC33"/><path d="M6.2 29.8 C6 26.6 7.6 23.6 10.4 22.4 L13.8 25.8 C12.6 28.6 9.4 30.2 6.2 29.8 Z" fill="#FFCC4D"/><path d="M1 17.6 L10 10.6 L16 12 L10 20.6 Z" fill="#A0041E"/><path d="M18.4 35 L25.4 26 L24 20 L15.4 26 Z" fill="#A0041E"/><path d="M35.4 0.6 C35.4 0.6 21.4 1.4 12.6 12.2 C8 17.8 7.6 24.2 8.6 27.4 C11.8 28.4 18.2 28 23.8 23.4 C34.6 14.6 35.4 0.6 35.4 0.6 Z" fill="#55ACEE"/><path d="M22.6 13.4 L8.4 25.4 C8.4 26.2 8.5 26.9 8.6 27.4 C9.1 27.5 9.8 27.6 10.6 27.6 Z" fill="#A0041E"/><path d="M23.4 7.4 C26.8 7.6 29 10.4 28.6 13.6" fill="none" stroke="#000" stroke-width="3" stroke-linecap="butt"/></svg>
<span class="t " style="left:1354.2px;top:803.3px;font-size:25.4px;line-height:32px;color:#164B35;letter-spacing:-0.45px;-webkit-text-stroke:0.50px #164B35;">79</span>
<div class="b " style="left:1659.0px;top:807.5px;width:24.0px;height:24.0px;background:#4C9AFF;border-radius:12px;"></div>
<div class="b " style="left:1691.0px;top:807.5px;width:24.0px;height:24.0px;background:#4C9AFF;border-radius:12px;"></div>
<div class="b " style="left:1723.0px;top:807.5px;width:24.0px;height:24.0px;background:#4C9AFF;border-radius:12px;"></div>
<div class="b " style="left:1762.8px;top:815.3px;width:8.4px;height:8.4px;background:#F0F1F4;border-radius:5px;"></div>
<div class="b " style="left:1794.8px;top:815.3px;width:8.4px;height:8.4px;background:#F0F1F4;border-radius:5px;"></div>
<div class="b " style="left:1942.0px;top:802.0px;width:80.0px;height:40.0px;background:#F1F2F4;border-radius:6px;"></div>
<svg class="b" style="left:1954.0px;top:807.9px;" width="32.0" height="28.4" viewBox="0 0 32.2 28.4"><g fill="none" stroke="#44546F" stroke-width="2.5" stroke-linecap="round" stroke-linejoin="round"><path d="M16.1 2 V25.4"/><path d="M6.4 6.3 C9.6 4.7 12.8 4.1 16.1 4.1 C19.4 4.1 22.6 4.7 25.8 6.3"/><path d="M7 6.6 L2.2 18 M7 6.6 L11.8 18"/><path d="M25.2 6.6 L20.4 18 M25.2 6.6 L30 18"/></g><circle cx="16.1" cy="1.9" r="1.9" fill="#44546F"/><path d="M0 17.6 H14 C14 20.8 10.8 22.9 7 22.9 C3.2 22.9 0 20.8 0 17.6 Z" fill="#44546F"/><path d="M18.2 17.6 H32.2 C32.2 20.8 29 22.9 25.2 22.9 C21.4 22.9 18.2 20.8 18.2 17.6 Z" fill="#44546F"/><path d="M10 28.4 C10 25.6 12.8 24.1 16.1 24.1 C19.4 24.1 22.4 25.6 22.4 28.4 Z" fill="#44546F"/></svg>
<span class="t " style="left:1999.2px;top:805.7px;font-size:25.4px;line-height:32px;color:#253858;-webkit-text-stroke:0.40px #253858;">5</span>
<div class="b " style="left:2030.0px;top:802.0px;width:200.0px;height:40.0px;background:#F1F2F4;border-radius:6px;"></div>
<span class="t " style="left:2038.8px;top:805.7px;font-size:25.4px;line-height:32px;color:#253858;-webkit-text-stroke:0.40px #253858;letter-spacing:0.5px;">Enterprise</span>
</div>
<div class="row">
<div class="cb" style="left:185px;top:889.0px"></div>
<span class="t " style="left:243.5px;top:884.9px;font-size:29.6px;line-height:37px;color:#2A3B5B;letter-spacing:0.25px;-webkit-text-stroke:0.20px #2A3B5B;">Budgeting tool</span>
<div class="b " style="left:875.0px;top:883.5px;width:220.0px;height:40.0px;background:#E9F2FF;border-radius:6px;"></div>
<svg role="img" aria-label="😍" class="b" style="left:887.0px;top:887.1px;" width="32.0" height="32.0" viewBox="0 0 36 36"><circle cx="18" cy="19" r="17" fill="#FFCC4D"/><path d="M18 22.6c-3 0-5-.35-7.4-.82-.56-.1-1.64 0-1.64 1.64 0 3.28 3.76 7.0 9.04 7.0s9.04-3.72 9.04-7.0c0-1.64-1.08-1.75-1.64-1.64-2.4.47-4.4.82-7.4.82z" fill="#664500"/><path d="M16.2 4.6c-1.2-3.2-4.8-4.6-7.8-3.4-2.4.9-3.8 3.2-3.9 5.6-1.9-1.4-4.6-1.6-6.6 0" fill="none"/><path d="M9.6 16.4 C4.4 14.6 0.6 11.2 0.9 7.2 C1.1 4.4 3.6 2.6 6.1 3.3 C7.5 3.7 8.5 4.7 8.9 6 C9.9 5 11.3 4.3 12.8 4.7 C15.3 5.3 16.6 8.1 15.5 10.7 C14.4 13.3 12.2 15.2 9.6 16.4 Z" fill="#DD2E44" transform="rotate(-8 9 10)"/><path d="M26.4 16.4 C31.6 14.6 35.4 11.2 35.1 7.2 C34.9 4.4 32.4 2.6 29.9 3.3 C28.5 3.7 27.5 4.7 27.1 6 C26.1 5 24.7 4.3 23.2 4.7 C20.7 5.3 19.4 8.1 20.5 10.7 C21.6 13.3 23.8 15.2 26.4 16.4 Z" fill="#DD2E44" transform="rotate(8 27 10)"/></svg>
<span class="t " style="left:932.6px;top:887.0px;font-size:25.2px;line-height:32px;color:#09326C;letter-spacing:0.55px;-webkit-text-stroke:0.83px #09326C;">Delight users</span>
<div class="b " style="left:1297.0px;top:883.5px;width:96.0px;height:40.0px;background:#F8E6A0;border-radius:6px;"></div>
<svg role="img" aria-label="🎯" class="b" style="left:1309.0px;top:887.3px;" width="32.4" height="32.4" viewBox="0 0 36 36"><circle cx="17.4" cy="17.6" r="17.4" fill="#CCD6DD"/><circle cx="17.4" cy="17.6" r="13.4" fill="#3B88C3"/><circle cx="17.4" cy="17.6" r="9.8" fill="#DD2E44"/><circle cx="17.4" cy="17.6" r="5.8" fill="#FFAC33"/><path d="M22.4 21.2 C26 19.6 31.4 22.4 35.2 27.6 L31.6 31 Z M21.4 22.2 C19.8 25.8 22.6 31.2 27.8 35 L31.2 31.4 Z" fill="#000"/><path d="M16.6 16.8 L31.6 31.2" stroke="#C1694F" stroke-width="1.4" stroke-linecap="round"/></svg>
<span class="t " style="left:1353.8px;top:887.3px;font-size:25.4px;line-height:32px;color:#533F04;letter-spacing:-0.55px;-webkit-text-stroke:0.50px #533F04;">78</span>
<div class="b " style="left:1659.0px;top:891.5px;width:24.0px;height:24.0px;background:#4C9AFF;border-radius:12px;"></div>
<div class="b " style="left:1691.0px;top:891.5px;width:24.0px;height:24.0px;background:#4C9AFF;border-radius:12px;"></div>
<div class="b " style="left:1723.0px;top:891.5px;width:24.0px;height:24.0px;background:#4C9AFF;border-radius:12px;"></div>
<div class="b " style="left:1762.8px;top:899.3px;width:8.4px;height:8.4px;background:#F0F1F4;border-radius:5px;"></div>
<div class="b " style="left:1794.8px;top:899.3px;width:8.4px;height:8.4px;background:#F0F1F4;border-radius:5px;"></div>
<div class="b " style="left:1942.0px;top:886.0px;width:80.0px;height:40.0px;background:#F1F2F4;border-radius:6px;"></div>
<svg class="b" style="left:1954.0px;top:891.9px;" width="32.0" height="28.4" viewBox="0 0 32.2 28.4"><g fill="none" stroke="#44546F" stroke-width="2.5" stroke-linecap="round" stroke-linejoin="round"><path d="M16.1 2 V25.4"/><path d="M6.4 6.3 C9.6 4.7 12.8 4.1 16.1 4.1 C19.4 4.1 22.6 4.7 25.8 6.3"/><path d="M7 6.6 L2.2 18 M7 6.6 L11.8 18"/><path d="M25.2 6.6 L20.4 18 M25.2 6.6 L30 18"/></g><circle cx="16.1" cy="1.9" r="1.9" fill="#44546F"/><path d="M0 17.6 H14 C14 20.8 10.8 22.9 7 22.9 C3.2 22.9 0 20.8 0 17.6 Z" fill="#44546F"/><path d="M18.2 17.6 H32.2 C32.2 20.8 29 22.9 25.2 22.9 C21.4 22.9 18.2 20.8 18.2 17.6 Z" fill="#44546F"/><path d="M10 28.4 C10 25.6 12.8 24.1 16.1 24.1 C19.4 24.1 22.4 25.6 22.4 28.4 Z" fill="#44546F"/></svg>
<span class="t " style="left:1999.2px;top:889.7px;font-size:25.4px;line-height:32px;color:#253858;-webkit-text-stroke:0.40px #253858;">5</span>
<div class="b " style="left:2030.0px;top:886.0px;width:200.0px;height:40.0px;background:#F1F2F4;border-radius:6px;"></div>
<span class="t " style="left:2038.8px;top:889.7px;font-size:25.4px;line-height:32px;color:#253858;-webkit-text-stroke:0.40px #253858;letter-spacing:0.5px;">Scaleup</span>
</div>
<div class="row">
<div class="cb" style="left:185px;top:973.0px"></div>
<span class="t " style="left:243.5px;top:968.9px;font-size:29.6px;line-height:37px;color:#2A3B5B;letter-spacing:-0.04px;-webkit-text-stroke:0.20px #2A3B5B;">CS chatbot AI</span>
<div class="b " style="left:875.0px;top:967.5px;width:214.0px;height:40.0px;background:#E9F2FF;border-radius:6px;"></div>
<svg role="img" aria-label="🧪" class="b" style="left:887.0px;top:971.1px;" width="32.0" height="32.0" viewBox="0 0 36 36"><g transform="rotate(45 18 18)"><path d="M11.6 -3 H24.4 V33 C24.4 36.6 21.6 39.4 18 39.4 C14.4 39.4 11.6 36.6 11.6 33 Z" fill="#CCD6DD" stroke="#8899A6" stroke-width="2.6"/><path d="M13 9 L23 6.5 V33 C23 35.8 20.8 38 18 38 C15.2 38 13 35.8 13 33 Z" fill="#5DDB86"/><ellipse cx="18" cy="-3" rx="6.4" ry="2.2" fill="#E1E8ED" stroke="#8899A6" stroke-width="1.6"/><circle cx="16" cy="20" r="1.1" fill="#3CB371"/><circle cx="20" cy="27" r="1.1" fill="#3CB371"/><circle cx="17" cy="33" r="1.1" fill="#3CB371"/><circle cx="20.4" cy="14" r="0.9" fill="#3CB371"/></g></svg>
<span class="t " style="left:932.6px;top:971.0px;font-size:25.2px;line-height:32px;color:#09326C;letter-spacing:0.92px;-webkit-text-stroke:0.83px #09326C;">Differentiate</span>
<div class="b " style="left:1297.0px;top:967.5px;width:94.0px;height:40.0px;background:#F8E6A0;border-radius:6px;"></div>
<svg role="img" aria-label="🎯" class="b" style="left:1309.0px;top:971.3px;" width="32.4" height="32.4" viewBox="0 0 36 36"><circle cx="17.4" cy="17.6" r="17.4" fill="#CCD6DD"/><circle cx="17.4" cy="17.6" r="13.4" fill="#3B88C3"/><circle cx="17.4" cy="17.6" r="9.8" fill="#DD2E44"/><circle cx="17.4" cy="17.6" r="5.8" fill="#FFAC33"/><path d="M22.4 21.2 C26 19.6 31.4 22.4 35.2 27.6 L31.6 31 Z M21.4 22.2 C19.8 25.8 22.6 31.2 27.8 35 L31.2 31.4 Z" fill="#000"/><path d="M16.6 16.8 L31.6 31.2" stroke="#C1694F" stroke-width="1.4" stroke-linecap="round"/></svg>
<span class="t " style="left:1353.8px;top:971.3px;font-size:25.4px;line-height:32px;color:#533F04;letter-spacing:-0.55px;-webkit-text-stroke:0.50px #533F04;">76</span>
<div class="b " style="left:1659.0px;top:975.5px;width:24.0px;height:24.0px;background:#4C9AFF;border-radius:12px;"></div>
<div class="b " style="left:1691.0px;top:975.5px;width:24.0px;height:24.0px;background:#4C9AFF;border-radius:12px;"></div>
<div class="b " style="left:1730.8px;top:983.3px;width:8.4px;height:8.4px;background:#F0F1F4;border-radius:5px;"></div>
<div class="b " style="left:1762.8px;top:983.3px;width:8.4px;height:8.4px;background:#F0F1F4;border-radius:5px;"></div>
<div class="b " style="left:1794.8px;top:983.3px;width:8.4px;height:8.4px;background:#F0F1F4;border-radius:5px;"></div>
<div class="b " style="left:1942.0px;top:970.0px;width:80.0px;height:40.0px;background:#F1F2F4;border-radius:6px;"></div>
<svg class="b" style="left:1954.0px;top:975.9px;" width="32.0" height="28.4" viewBox="0 0 32.2 28.4"><g fill="none" stroke="#44546F" stroke-width="2.5" stroke-linecap="round" stroke-linejoin="round"><path d="M16.1 2 V25.4"/><path d="M6.4 6.3 C9.6 4.7 12.8 4.1 16.1 4.1 C19.4 4.1 22.6 4.7 25.8 6.3"/><path d="M7 6.6 L2.2 18 M7 6.6 L11.8 18"/><path d="M25.2 6.6 L20.4 18 M25.2 6.6 L30 18"/></g><circle cx="16.1" cy="1.9" r="1.9" fill="#44546F"/><path d="M0 17.6 H14 C14 20.8 10.8 22.9 7 22.9 C3.2 22.9 0 20.8 0 17.6 Z" fill="#44546F"/><path d="M18.2 17.6 H32.2 C32.2 20.8 29 22.9 25.2 22.9 C21.4 22.9 18.2 20.8 18.2 17.6 Z" fill="#44546F"/><path d="M10 28.4 C10 25.6 12.8 24.1 16.1 24.1 C19.4 24.1 22.4 25.6 22.4 28.4 Z" fill="#44546F"/></svg>
<span class="t " style="left:1999.2px;top:973.7px;font-size:25.4px;line-height:32px;color:#253858;-webkit-text-stroke:0.40px #253858;">5</span>
<div class="b " style="left:2030.0px;top:970.0px;width:70.0px;height:40.0px;background:#F1F2F4;border-radius:6px;"></div>
<span class="t " style="left:2038.8px;top:973.7px;font-size:25.4px;line-height:32px;color:#253858;letter-spacing:-1.42px;-webkit-text-stroke:0.40px #253858;">SMB</span>
</div>
<div class="row">
<div class="cb" style="left:185px;top:1057.0px"></div>
<span class="t " style="left:243.5px;top:1052.9px;font-size:29.6px;line-height:37px;color:#2A3B5B;letter-spacing:-0.04px;-webkit-text-stroke:0.20px #2A3B5B;">Gold rewards marketing push</span>
<div class="b " style="left:875.0px;top:1051.5px;width:210.0px;height:40.0px;background:#E9F2FF;border-radius:6px;"></div>
<svg role="img" aria-label="🤝" class="b" style="left:887.0px;top:1055.1px;" width="32.0" height="32.0" viewBox="0 0 36 36"><path d="M1 17.5 L6.5 9.5 L13 11 L17 7.5 L21.5 9.5 L25 8.5 L30 9.8 L35.2 17.8 L30.5 21.5 L22 30.5 C21 31.6 19.6 31.8 18.6 31 C17.6 32 16 32.2 15 31.2 C13.8 31.8 12.4 31.4 11.8 30.2 C10.6 30.6 9.4 30 9 28.8 L5.5 22 Z" fill="#FFCC4D"/><path d="M15 4.2 L17.6 7.2 L20.2 3.8 L22 6 L20.4 9.6 L16 9.4 L13.6 6 Z" fill="#FFCC4D"/><path d="M18 12.4 L25.8 18.6 M14 21 L19 25.6 M12.4 24 L16.6 28 M16.4 18.4 L22 23.4" stroke="#F4A72A" stroke-width="1.5" stroke-linecap="round" fill="none"/><path d="M17.4 10.6 L20 12.6 L17.8 13.6 Z" fill="#E9F2FF"/></svg>
<span class="t " style="left:932.6px;top:1055.0px;font-size:25.2px;line-height:32px;color:#09326C;letter-spacing:0.59px;-webkit-text-stroke:0.83px #09326C;">Build loyalty</span>
<div class="b " style="left:1297.0px;top:1051.5px;width:94.0px;height:40.0px;background:#F8E6A0;border-radius:6px;"></div>
<svg role="img" aria-label="🎯" class="b" style="left:1309.0px;top:1055.3px;" width="32.4" height="32.4" viewBox="0 0 36 36"><circle cx="17.4" cy="17.6" r="17.4" fill="#CCD6DD"/><circle cx="17.4" cy="17.6" r="13.4" fill="#3B88C3"/><circle cx="17.4" cy="17.6" r="9.8" fill="#DD2E44"/><circle cx="17.4" cy="17.6" r="5.8" fill="#FFAC33"/><path d="M22.4 21.2 C26 19.6 31.4 22.4 35.2 27.6 L31.6 31 Z M21.4 22.2 C19.8 25.8 22.6 31.2 27.8 35 L31.2 31.4 Z" fill="#000"/><path d="M16.6 16.8 L31.6 31.2" stroke="#C1694F" stroke-width="1.4" stroke-linecap="round"/></svg>
<span class="t " style="left:1353.8px;top:1055.3px;font-size:25.4px;line-height:32px;color:#533F04;letter-spacing:-0.55px;-webkit-text-stroke:0.50px #533F04;">75</span>
<div class="b " style="left:1659.0px;top:1059.5px;width:24.0px;height:24.0px;background:#4C9AFF;border-radius:12px;"></div>
<div class="b " style="left:1698.8px;top:1067.3px;width:8.4px;height:8.4px;background:#F0F1F4;border-radius:5px;"></div>
<div class="b " style="left:1730.8px;top:1067.3px;width:8.4px;height:8.4px;background:#F0F1F4;border-radius:5px;"></div>
<div class="b " style="left:1762.8px;top:1067.3px;width:8.4px;height:8.4px;background:#F0F1F4;border-radius:5px;"></div>
<div class="b " style="left:1794.8px;top:1067.3px;width:8.4px;height:8.4px;background:#F0F1F4;border-radius:5px;"></div>
<div class="b " style="left:1942.0px;top:1054.0px;width:82.0px;height:40.0px;background:#F1F2F4;border-radius:6px;"></div>
<svg class="b" style="left:1954.0px;top:1059.9px;" width="32.0" height="28.4" viewBox="0 0 32.2 28.4"><g fill="none" stroke="#44546F" stroke-width="2.5" stroke-linecap="round" stroke-linejoin="round"><path d="M16.1 2 V25.4"/><path d="M6.4 6.3 C9.6 4.7 12.8 4.1 16.1 4.1 C19.4 4.1 22.6 4.7 25.8 6.3"/><path d="M7 6.6 L2.2 18 M7 6.6 L11.8 18"/><path d="M25.2 6.6 L20.4 18 M25.2 6.6 L30 18"/></g><circle cx="16.1" cy="1.9" r="1.9" fill="#44546F"/><path d="M0 17.6 H14 C14 20.8 10.8 22.9 7 22.9 C3.2 22.9 0 20.8 0 17.6 Z" fill="#44546F"/><path d="M18.2 17.6 H32.2 C32.2 20.8 29 22.9 25.2 22.9 C21.4 22.9 18.2 20.8 18.2 17.6 Z" fill="#44546F"/><path d="M10 28.4 C10 25.6 12.8 24.1 16.1 24.1 C19.4 24.1 22.4 25.6 22.4 28.4 Z" fill="#44546F"/></svg>
<span class="t " style="left:1999.2px;top:1057.7px;font-size:25.4px;line-height:32px;color:#253858;-webkit-text-stroke:0.40px #253858;">4</span>
<div class="b " style="left:2032.0px;top:1054.0px;width:200.0px;height:40.0px;background:#F1F2F4;border-radius:6px;"></div>
<span class="t " style="left:2040.8px;top:1057.7px;font-size:25.4px;line-height:32px;color:#253858;-webkit-text-stroke:0.40px #253858;letter-spacing:0.5px;">Enterprise</span>
</div>
<div class="row">
<div class="cb" style="left:185px;top:1141.0px"></div>
<span class="t " style="left:243.5px;top:1136.9px;font-size:29.6px;line-height:37px;color:#2A3B5B;letter-spacing:0.20px;-webkit-text-stroke:0.20px #2A3B5B;">Instant transactions</span>
<div class="b " style="left:875.0px;top:1135.5px;width:220.0px;height:40.0px;background:#E9F2FF;border-radius:6px;"></div>
<svg role="img" aria-label="😍" class="b" style="left:887.0px;top:1139.1px;" width="32.0" height="32.0" viewBox="0 0 36 36"><circle cx="18" cy="19" r="17" fill="#FFCC4D"/><path d="M18 22.6c-3 0-5-.35-7.4-.82-.56-.1-1.64 0-1.64 1.64 0 3.28 3.76 7.0 9.04 7.0s9.04-3.72 9.04-7.0c0-1.64-1.08-1.75-1.64-1.64-2.4.47-4.4.82-7.4.82z" fill="#664500"/><path d="M16.2 4.6c-1.2-3.2-4.8-4.6-7.8-3.4-2.4.9-3.8 3.2-3.9 5.6-1.9-1.4-4.6-1.6-6.6 0" fill="none"/><path d="M9.6 16.4 C4.4 14.6 0.6 11.2 0.9 7.2 C1.1 4.4 3.6 2.6 6.1 3.3 C7.5 3.7 8.5 4.7 8.9 6 C9.9 5 11.3 4.3 12.8 4.7 C15.3 5.3 16.6 8.1 15.5 10.7 C14.4 13.3 12.2 15.2 9.6 16.4 Z" fill="#DD2E44" transform="rotate(-8 9 10)"/><path d="M26.4 16.4 C31.6 14.6 35.4 11.2 35.1 7.2 C34.9 4.4 32.4 2.6 29.9 3.3 C28.5 3.7 27.5 4.7 27.1 6 C26.1 5 24.7 4.3 23.2 4.7 C20.7 5.3 19.4 8.1 20.5 10.7 C21.6 13.3 23.8 15.2 26.4 16.4 Z" fill="#DD2E44" transform="rotate(8 27 10)"/></svg>
<span class="t " style="left:932.6px;top:1139.0px;font-size:25.2px;line-height:32px;color:#09326C;letter-spacing:0.55px;-webkit-text-stroke:0.83px #09326C;">Delight users</span>
<div class="b " style="left:1297.0px;top:1135.5px;width:96.0px;height:40.0px;background:#F8E6A0;border-radius:6px;"></div>
<svg role="img" aria-label="🎯" class="b" style="left:1309.0px;top:1139.3px;" width="32.4" height="32.4" viewBox="0 0 36 36"><circle cx="17.4" cy="17.6" r="17.4" fill="#CCD6DD"/><circle cx="17.4" cy="17.6" r="13.4" fill="#3B88C3"/><circle cx="17.4" cy="17.6" r="9.8" fill="#DD2E44"/><circle cx="17.4" cy="17.6" r="5.8" fill="#FFAC33"/><path d="M22.4 21.2 C26 19.6 31.4 22.4 35.2 27.6 L31.6 31 Z M21.4 22.2 C19.8 25.8 22.6 31.2 27.8 35 L31.2 31.4 Z" fill="#000"/><path d="M16.6 16.8 L31.6 31.2" stroke="#C1694F" stroke-width="1.4" stroke-linecap="round"/></svg>
<span class="t " style="left:1353.8px;top:1139.3px;font-size:25.4px;line-height:32px;color:#533F04;letter-spacing:1.95px;-webkit-text-stroke:0.50px #533F04;">70</span>
<div class="b " style="left:1659.0px;top:1143.5px;width:24.0px;height:24.0px;background:#4C9AFF;border-radius:12px;"></div>
<div class="b " style="left:1698.8px;top:1151.3px;width:8.4px;height:8.4px;background:#F0F1F4;border-radius:5px;"></div>
<div class="b " style="left:1730.8px;top:1151.3px;width:8.4px;height:8.4px;background:#F0F1F4;border-radius:5px;"></div>
<div class="b " style="left:1762.8px;top:1151.3px;width:8.4px;height:8.4px;background:#F0F1F4;border-radius:5px;"></div>
<div class="b " style="left:1794.8px;top:1151.3px;width:8.4px;height:8.4px;background:#F0F1F4;border-radius:5px;"></div>
<div class="b " style="left:1942.0px;top:1138.0px;width:80.0px;height:40.0px;background:#F1F2F4;border-radius:6px;"></div>
<svg class="b" style="left:1954.0px;top:1143.9px;" width="32.0" height="28.4" viewBox="0 0 32.2 28.4"><g fill="none" stroke="#44546F" stroke-width="2.5" stroke-linecap="round" stroke-linejoin="round"><path d="M16.1 2 V25.4"/><path d="M6.4 6.3 C9.6 4.7 12.8 4.1 16.1 4.1 C19.4 4.1 22.6 4.7 25.8 6.3"/><path d="M7 6.6 L2.2 18 M7 6.6 L11.8 18"/><path d="M25.2 6.6 L20.4 18 M25.2 6.6 L30 18"/></g><circle cx="16.1" cy="1.9" r="1.9" fill="#44546F"/><path d="M0 17.6 H14 C14 20.8 10.8 22.9 7 22.9 C3.2 22.9 0 20.8 0 17.6 Z" fill="#44546F"/><path d="M18.2 17.6 H32.2 C32.2 20.8 29 22.9 25.2 22.9 C21.4 22.9 18.2 20.8 18.2 17.6 Z" fill="#44546F"/><path d="M10 28.4 C10 25.6 12.8 24.1 16.1 24.1 C19.4 24.1 22.4 25.6 22.4 28.4 Z" fill="#44546F"/></svg>
<span class="t " style="left:1999.2px;top:1141.7px;font-size:25.4px;line-height:32px;color:#253858;-webkit-text-stroke:0.40px #253858;">5</span>
<div class="b " style="left:2030.0px;top:1138.0px;width:70.0px;height:40.0px;background:#F1F2F4;border-radius:6px;"></div>
<span class="t " style="left:2038.8px;top:1141.7px;font-size:25.4px;line-height:32px;color:#253858;letter-spacing:-1.42px;-webkit-text-stroke:0.40px #253858;">SMB</span>
</div>
<div class="row">
<div class="cb" style="left:185px;top:1225.0px"></div>
<span class="t " style="left:243.5px;top:1220.9px;font-size:29.6px;line-height:37px;color:#2A3B5B;letter-spacing:0.00px;-webkit-text-stroke:0.20px #2A3B5B;">Automated tasks</span>
<div class="b " style="left:875.0px;top:1219.5px;width:220.0px;height:40.0px;background:#E9F2FF;border-radius:6px;"></div>
<svg role="img" aria-label="😍" class="b" style="left:887.0px;top:1223.1px;" width="32.0" height="32.0" viewBox="0 0 36 36"><circle cx="18" cy="19" r="17" fill="#FFCC4D"/><path d="M18 22.6c-3 0-5-.35-7.4-.82-.56-.1-1.64 0-1.64 1.64 0 3.28 3.76 7.0 9.04 7.0s9.04-3.72 9.04-7.0c0-1.64-1.08-1.75-1.64-1.64-2.4.47-4.4.82-7.4.82z" fill="#664500"/><path d="M16.2 4.6c-1.2-3.2-4.8-4.6-7.8-3.4-2.4.9-3.8 3.2-3.9 5.6-1.9-1.4-4.6-1.6-6.6 0" fill="none"/><path d="M9.6 16.4 C4.4 14.6 0.6 11.2 0.9 7.2 C1.1 4.4 3.6 2.6 6.1 3.3 C7.5 3.7 8.5 4.7 8.9 6 C9.9 5 11.3 4.3 12.8 4.7 C15.3 5.3 16.6 8.1 15.5 10.7 C14.4 13.3 12.2 15.2 9.6 16.4 Z" fill="#DD2E44" transform="rotate(-8 9 10)"/><path d="M26.4 16.4 C31.6 14.6 35.4 11.2 35.1 7.2 C34.9 4.4 32.4 2.6 29.9 3.3 C28.5 3.7 27.5 4.7 27.1 6 C26.1 5 24.7 4.3 23.2 4.7 C20.7 5.3 19.4 8.1 20.5 10.7 C21.6 13.3 23.8 15.2 26.4 16.4 Z" fill="#DD2E44" transform="rotate(8 27 10)"/></svg>
<span class="t " style="left:932.6px;top:1223.0px;font-size:25.2px;line-height:32px;color:#09326C;letter-spacing:0.55px;-webkit-text-stroke:0.83px #09326C;">Delight users</span>
<div class="b " style="left:1297.0px;top:1219.5px;width:48.0px;height:40.0px;background:#FFF3E4;border-radius:6px;"></div>
<span class="t " style="left:1306.6px;top:1223.3px;font-size:25.4px;line-height:32px;color:#703E0E;letter-spacing:0.55px;-webkit-text-stroke:0.75px #703E0E;">56</span>
<div class="b " style="left:1659.0px;top:1227.5px;width:24.0px;height:24.0px;background:#4C9AFF;border-radius:12px;"></div>
<div class="b " style="left:1691.0px;top:1227.5px;width:24.0px;height:24.0px;background:#4C9AFF;border-radius:12px;"></div>
<div class="b " style="left:1730.8px;top:1235.3px;width:8.4px;height:8.4px;background:#F0F1F4;border-radius:5px;"></div>
<div class="b " style="left:1762.8px;top:1235.3px;width:8.4px;height:8.4px;background:#F0F1F4;border-radius:5px;"></div>
<div class="b " style="left:1794.8px;top:1235.3px;width:8.4px;height:8.4px;background:#F0F1F4;border-radius:5px;"></div>
<div class="b " style="left:1942.0px;top:1222.0px;width:82.0px;height:40.0px;background:#F1F2F4;border-radius:6px;"></div>
<svg class="b" style="left:1954.0px;top:1227.9px;" width="32.0" height="28.4" viewBox="0 0 32.2 28.4"><g fill="none" stroke="#44546F" stroke-width="2.5" stroke-linecap="round" stroke-linejoin="round"><path d="M16.1 2 V25.4"/><path d="M6.4 6.3 C9.6 4.7 12.8 4.1 16.1 4.1 C19.4 4.1 22.6 4.7 25.8 6.3"/><path d="M7 6.6 L2.2 18 M7 6.6 L11.8 18"/><path d="M25.2 6.6 L20.4 18 M25.2 6.6 L30 18"/></g><circle cx="16.1" cy="1.9" r="1.9" fill="#44546F"/><path d="M0 17.6 H14 C14 20.8 10.8 22.9 7 22.9 C3.2 22.9 0 20.8 0 17.6 Z" fill="#44546F"/><path d="M18.2 17.6 H32.2 C32.2 20.8 29 22.9 25.2 22.9 C21.4 22.9 18.2 20.8 18.2 17.6 Z" fill="#44546F"/><path d="M10 28.4 C10 25.6 12.8 24.1 16.1 24.1 C19.4 24.1 22.4 25.6 22.4 28.4 Z" fill="#44546F"/></svg>
<span class="t " style="left:1999.2px;top:1225.7px;font-size:25.4px;line-height:32px;color:#253858;-webkit-text-stroke:0.40px #253858;">6</span>
<div class="b " style="left:2032.0px;top:1222.0px;width:70.0px;height:40.0px;background:#F1F2F4;border-radius:6px;"></div>
<span class="t " style="left:2040.8px;top:1225.7px;font-size:25.4px;line-height:32px;color:#253858;letter-spacing:-1.42px;-webkit-text-stroke:0.40px #253858;">SMB</span>
</div>
<div class="row">
<div class="cb" style="left:185px;top:1309.0px"></div>
<span class="t " style="left:243.5px;top:1304.9px;font-size:29.6px;line-height:37px;color:#2A3B5B;letter-spacing:-0.37px;-webkit-text-stroke:0.20px #2A3B5B;">QR payment links</span>
<div class="b " style="left:875.0px;top:1303.5px;width:214.0px;height:40.0px;background:#E9F2FF;border-radius:6px;"></div>
<svg role="img" aria-label="🧪" class="b" style="left:887.0px;top:1307.1px;" width="32.0" height="32.0" viewBox="0 0 36 36"><g transform="rotate(45 18 18)"><path d="M11.6 -3 H24.4 V33 C24.4 36.6 21.6 39.4 18 39.4 C14.4 39.4 11.6 36.6 11.6 33 Z" fill="#CCD6DD" stroke="#8899A6" stroke-width="2.6"/><path d="M13 9 L23 6.5 V33 C23 35.8 20.8 38 18 38 C15.2 38 13 35.8 13 33 Z" fill="#5DDB86"/><ellipse cx="18" cy="-3" rx="6.4" ry="2.2" fill="#E1E8ED" stroke="#8899A6" stroke-width="1.6"/><circle cx="16" cy="20" r="1.1" fill="#3CB371"/><circle cx="20" cy="27" r="1.1" fill="#3CB371"/><circle cx="17" cy="33" r="1.1" fill="#3CB371"/><circle cx="20.4" cy="14" r="0.9" fill="#3CB371"/></g></svg>
<span class="t " style="left:932.6px;top:1307.0px;font-size:25.2px;line-height:32px;color:#09326C;letter-spacing:0.92px;-webkit-text-stroke:0.83px #09326C;">Differentiate</span>
<div class="b " style="left:1297.0px;top:1303.5px;width:48.0px;height:40.0px;background:#FFF3E4;border-radius:6px;"></div>
<span class="t " style="left:1306.6px;top:1307.3px;font-size:25.4px;line-height:32px;color:#703E0E;letter-spacing:0.55px;-webkit-text-stroke:0.75px #703E0E;">55</span>
<div class="b " style="left:1659.0px;top:1311.5px;width:24.0px;height:24.0px;background:#4C9AFF;border-radius:12px;"></div>
<div class="b " style="left:1698.8px;top:1319.3px;width:8.4px;height:8.4px;background:#F0F1F4;border-radius:5px;"></div>
<div class="b " style="left:1730.8px;top:1319.3px;width:8.4px;height:8.4px;background:#F0F1F4;border-radius:5px;"></div>
<div class="b " style="left:1762.8px;top:1319.3px;width:8.4px;height:8.4px;background:#F0F1F4;border-radius:5px;"></div>
<div class="b " style="left:1794.8px;top:1319.3px;width:8.4px;height:8.4px;background:#F0F1F4;border-radius:5px;"></div>
<div class="b " style="left:1942.0px;top:1306.0px;width:80.0px;height:40.0px;background:#F1F2F4;border-radius:6px;"></div>
<svg class="b" style="left:1954.0px;top:1311.9px;" width="32.0" height="28.4" viewBox="0 0 32.2 28.4"><g fill="none" stroke="#44546F" stroke-width="2.5" stroke-linecap="round" stroke-linejoin="round"><path d="M16.1 2 V25.4"/><path d="M6.4 6.3 C9.6 4.7 12.8 4.1 16.1 4.1 C19.4 4.1 22.6 4.7 25.8 6.3"/><path d="M7 6.6 L2.2 18 M7 6.6 L11.8 18"/><path d="M25.2 6.6 L20.4 18 M25.2 6.6 L30 18"/></g><circle cx="16.1" cy="1.9" r="1.9" fill="#44546F"/><path d="M0 17.6 H14 C14 20.8 10.8 22.9 7 22.9 C3.2 22.9 0 20.8 0 17.6 Z" fill="#44546F"/><path d="M18.2 17.6 H32.2 C32.2 20.8 29 22.9 25.2 22.9 C21.4 22.9 18.2 20.8 18.2 17.6 Z" fill="#44546F"/><path d="M10 28.4 C10 25.6 12.8 24.1 16.1 24.1 C19.4 24.1 22.4 25.6 22.4 28.4 Z" fill="#44546F"/></svg>
<span class="t " style="left:1999.2px;top:1309.7px;font-size:25.4px;line-height:32px;color:#253858;-webkit-text-stroke:0.40px #253858;">3</span>
<div class="b " style="left:2030.0px;top:1306.0px;width:70.0px;height:40.0px;background:#F1F2F4;border-radius:6px;"></div>
<span class="t " style="left:2038.8px;top:1309.7px;font-size:25.4px;line-height:32px;color:#253858;letter-spacing:-1.42px;-webkit-text-stroke:0.40px #253858;">SMB</span>
</div>
<div class="row">
<div class="cb" style="left:185px;top:1393.0px"></div>
<span class="t " style="left:243.5px;top:1388.9px;font-size:29.6px;line-height:37px;color:#2A3B5B;letter-spacing:-0.08px;-webkit-text-stroke:0.20px #2A3B5B;">Managed investment</span>
<div class="b " style="left:875.0px;top:1387.5px;width:230.0px;height:40.0px;background:#E9F2FF;border-radius:6px;"></div>
<svg role="img" aria-label="🥚" class="b" style="left:887.0px;top:1391.1px;" width="32.0" height="32.0" viewBox="0 0 36 36"><path d="M18 2 C24.5 2 30 12 30 21.5 C30 29.5 24.8 34.6 18 34.6 C11.2 34.6 6 29.5 6 21.5 C6 12 11.5 2 18 2 Z" fill="#E1B9A4"/><path d="M17.4 1.6 C23.6 1.6 28.6 11 28.6 20.4 C28.6 28 23.8 32.8 17.4 32.8 C11 32.8 6 28 6 20.6 C6 11.4 11.2 1.6 17.4 1.6 Z" fill="#F7DECE"/></svg>
<span class="t " style="left:932.6px;top:1391.0px;font-size:25.2px;line-height:32px;color:#09326C;letter-spacing:0.69px;-webkit-text-stroke:0.83px #09326C;">New products</span>
<div class="b " style="left:1297.0px;top:1387.5px;width:48.0px;height:40.0px;background:#FFF3E4;border-radius:6px;"></div>
<span class="t " style="left:1306.6px;top:1391.3px;font-size:25.4px;line-height:32px;color:#703E0E;letter-spacing:0.55px;-webkit-text-stroke:0.75px #703E0E;">47</span>
<div class="b " style="left:1666.8px;top:1403.3px;width:8.4px;height:8.4px;background:#F0F1F4;border-radius:5px;"></div>
<div class="b " style="left:1698.8px;top:1403.3px;width:8.4px;height:8.4px;background:#F0F1F4;border-radius:5px;"></div>
<div class="b " style="left:1730.8px;top:1403.3px;width:8.4px;height:8.4px;background:#F0F1F4;border-radius:5px;"></div>
<div class="b " style="left:1762.8px;top:1403.3px;width:8.4px;height:8.4px;background:#F0F1F4;border-radius:5px;"></div>
<div class="b " style="left:1794.8px;top:1403.3px;width:8.4px;height:8.4px;background:#F0F1F4;border-radius:5px;"></div>
<div class="b " style="left:1942.0px;top:1390.0px;width:80.0px;height:40.0px;background:#F1F2F4;border-radius:6px;"></div>
<svg class="b" style="left:1954.0px;top:1395.9px;" width="32.0" height="28.4" viewBox="0 0 32.2 28.4"><g fill="none" stroke="#44546F" stroke-width="2.5" stroke-linecap="round" stroke-linejoin="round"><path d="M16.1 2 V25.4"/><path d="M6.4 6.3 C9.6 4.7 12.8 4.1 16.1 4.1 C19.4 4.1 22.6 4.7 25.8 6.3"/><path d="M7 6.6 L2.2 18 M7 6.6 L11.8 18"/><path d="M25.2 6.6 L20.4 18 M25.2 6.6 L30 18"/></g><circle cx="16.1" cy="1.9" r="1.9" fill="#44546F"/><path d="M0 17.6 H14 C14 20.8 10.8 22.9 7 22.9 C3.2 22.9 0 20.8 0 17.6 Z" fill="#44546F"/><path d="M18.2 17.6 H32.2 C32.2 20.8 29 22.9 25.2 22.9 C21.4 22.9 18.2 20.8 18.2 17.6 Z" fill="#44546F"/><path d="M10 28.4 C10 25.6 12.8 24.1 16.1 24.1 C19.4 24.1 22.4 25.6 22.4 28.4 Z" fill="#44546F"/></svg>
<span class="t " style="left:1999.2px;top:1393.7px;font-size:25.4px;line-height:32px;color:#253858;-webkit-text-stroke:0.40px #253858;">2</span>
<div class="b " style="left:2030.0px;top:1390.0px;width:70.0px;height:40.0px;background:#F1F2F4;border-radius:6px;"></div>
<span class="t " style="left:2038.8px;top:1393.7px;font-size:25.4px;line-height:32px;color:#253858;letter-spacing:-1.42px;-webkit-text-stroke:0.40px #253858;">SMB</span>
</div>
<div class="row">
<div class="cb" style="left:185px;top:1477.0px"></div>
<span class="t " style="left:243.5px;top:1472.9px;font-size:29.6px;line-height:37px;color:#2A3B5B;letter-spacing:0.03px;-webkit-text-stroke:0.20px #2A3B5B;">Self service: savings accounts</span>
<div class="b " style="left:875.0px;top:1471.5px;width:204.0px;height:40.0px;background:#E9F2FF;border-radius:6px;"></div>
<svg role="img" aria-label="💪" class="b" style="left:887.0px;top:1475.1px;" width="32.0" height="32.0" viewBox="0 0 36 36"><path d="M14.6 0.8 C17 1.6 19.6 2.6 21.4 4 C22.4 4.8 22.4 6 21.8 7 L22.6 9.2 L21.4 12.2 C20 12.4 18.4 12 17.2 11.2 C14.6 13 13 17 13.2 21.4 C16.4 18.6 21.4 17.4 26.4 18.2 C32 19.2 35.4 23 35.4 27.4 C35.4 32 31.6 34.8 26 35.4 C20 36 10 36.2 1.6 32.6 C1.2 24 3 13.6 8.2 6 C9.8 3.6 12 1.4 14.6 0.8 Z" fill="#FFDC5D"/><path d="M15 28.4 C19.6 31.6 27.6 30.6 30.6 25.2" fill="none" stroke="#EF9645" stroke-width="1.8" stroke-linecap="round"/><path d="M16.6 6.4 L19.8 7.4 M18 9.2 L20.6 9.4" stroke="#EF9645" stroke-width="1.2" stroke-linecap="round"/></svg>
<span class="t " style="left:932.6px;top:1475.0px;font-size:25.2px;line-height:32px;color:#09326C;letter-spacing:0.50px;-webkit-text-stroke:0.83px #09326C;">Self service</span>
<div class="b " style="left:1297.0px;top:1471.5px;width:49.0px;height:40.0px;background:#FFF3E4;border-radius:6px;"></div>
<span class="t " style="left:1306.6px;top:1475.3px;font-size:25.4px;line-height:32px;color:#703E0E;letter-spacing:1.55px;-webkit-text-stroke:0.75px #703E0E;">46</span>
<div class="b " style="left:1666.8px;top:1487.3px;width:8.4px;height:8.4px;background:#F0F1F4;border-radius:5px;"></div>
<div class="b " style="left:1698.8px;top:1487.3px;width:8.4px;height:8.4px;background:#F0F1F4;border-radius:5px;"></div>
<div class="b " style="left:1730.8px;top:1487.3px;width:8.4px;height:8.4px;background:#F0F1F4;border-radius:5px;"></div>
<div class="b " style="left:1762.8px;top:1487.3px;width:8.4px;height:8.4px;background:#F0F1F4;border-radius:5px;"></div>
<div class="b " style="left:1794.8px;top:1487.3px;width:8.4px;height:8.4px;background:#F0F1F4;border-radius:5px;"></div>
<div class="b " style="left:1942.0px;top:1474.0px;width:82.0px;height:40.0px;background:#F1F2F4;border-radius:6px;"></div>
<svg class="b" style="left:1954.0px;top:1479.9px;" width="32.0" height="28.4" viewBox="0 0 32.2 28.4"><g fill="none" stroke="#44546F" stroke-width="2.5" stroke-linecap="round" stroke-linejoin="round"><path d="M16.1 2 V25.4"/><path d="M6.4 6.3 C9.6 4.7 12.8 4.1 16.1 4.1 C19.4 4.1 22.6 4.7 25.8 6.3"/><path d="M7 6.6 L2.2 18 M7 6.6 L11.8 18"/><path d="M25.2 6.6 L20.4 18 M25.2 6.6 L30 18"/></g><circle cx="16.1" cy="1.9" r="1.9" fill="#44546F"/><path d="M0 17.6 H14 C14 20.8 10.8 22.9 7 22.9 C3.2 22.9 0 20.8 0 17.6 Z" fill="#44546F"/><path d="M18.2 17.6 H32.2 C32.2 20.8 29 22.9 25.2 22.9 C21.4 22.9 18.2 20.8 18.2 17.6 Z" fill="#44546F"/><path d="M10 28.4 C10 25.6 12.8 24.1 16.1 24.1 C19.4 24.1 22.4 25.6 22.4 28.4 Z" fill="#44546F"/></svg>
<span class="t " style="left:1999.2px;top:1477.7px;font-size:25.4px;line-height:32px;color:#253858;-webkit-text-stroke:0.40px #253858;">6</span>
<div class="b " style="left:2032.0px;top:1474.0px;width:200.0px;height:40.0px;background:#F1F2F4;border-radius:6px;"></div>
<span class="t " style="left:2040.8px;top:1477.7px;font-size:25.4px;line-height:32px;color:#253858;-webkit-text-stroke:0.40px #253858;letter-spacing:0.5px;">Enterprise</span>
</div>
<div class="row">
<div class="cb" style="left:185px;top:1561.0px"></div>
<span class="t " style="left:243.5px;top:1556.9px;font-size:29.6px;line-height:37px;color:#2A3B5B;letter-spacing:-0.24px;-webkit-text-stroke:0.20px #2A3B5B;">Family features</span>
<div class="b " style="left:875.0px;top:1555.5px;width:214.0px;height:40.0px;background:#E9F2FF;border-radius:6px;"></div>
<svg role="img" aria-label="🧪" class="b" style="left:887.0px;top:1559.1px;" width="32.0" height="32.0" viewBox="0 0 36 36"><g transform="rotate(45 18 18)"><path d="M11.6 -3 H24.4 V33 C24.4 36.6 21.6 39.4 18 39.4 C14.4 39.4 11.6 36.6 11.6 33 Z" fill="#CCD6DD" stroke="#8899A6" stroke-width="2.6"/><path d="M13 9 L23 6.5 V33 C23 35.8 20.8 38 18 38 C15.2 38 13 35.8 13 33 Z" fill="#5DDB86"/><ellipse cx="18" cy="-3" rx="6.4" ry="2.2" fill="#E1E8ED" stroke="#8899A6" stroke-width="1.6"/><circle cx="16" cy="20" r="1.1" fill="#3CB371"/><circle cx="20" cy="27" r="1.1" fill="#3CB371"/><circle cx="17" cy="33" r="1.1" fill="#3CB371"/><circle cx="20.4" cy="14" r="0.9" fill="#3CB371"/></g></svg>
<span class="t " style="left:932.6px;top:1559.0px;font-size:25.2px;line-height:32px;color:#09326C;letter-spacing:0.92px;-webkit-text-stroke:0.83px #09326C;">Differentiate</span>
<div class="b " style="left:1297.0px;top:1555.5px;width:48.0px;height:40.0px;background:#FFF3E4;border-radius:6px;"></div>
<span class="t " style="left:1306.6px;top:1559.3px;font-size:25.4px;line-height:32px;color:#703E0E;letter-spacing:0.55px;-webkit-text-stroke:0.75px #703E0E;">36</span>
<div class="b " style="left:1666.8px;top:1571.3px;width:8.4px;height:8.4px;background:#F0F1F4;border-radius:5px;"></div>
<div class="b " style="left:1698.8px;top:1571.3px;width:8.4px;height:8.4px;background:#F0F1F4;border-radius:5px;"></div>
<div class="b " style="left:1730.8px;top:1571.3px;width:8.4px;height:8.4px;background:#F0F1F4;border-radius:5px;"></div>
<div class="b " style="left:1762.8px;top:1571.3px;width:8.4px;height:8.4px;background:#F0F1F4;border-radius:5px;"></div>
<div class="b " style="left:1794.8px;top:1571.3px;width:8.4px;height:8.4px;background:#F0F1F4;border-radius:5px;"></div>
<div class="b " style="left:1942.0px;top:1558.0px;width:80.0px;height:40.0px;background:#F1F2F4;border-radius:6px;"></div>
<svg class="b" style="left:1954.0px;top:1563.9px;" width="32.0" height="28.4" viewBox="0 0 32.2 28.4"><g fill="none" stroke="#44546F" stroke-width="2.5" stroke-linecap="round" stroke-linejoin="round"><path d="M16.1 2 V25.4"/><path d="M6.4 6.3 C9.6 4.7 12.8 4.1 16.1 4.1 C19.4 4.1 22.6 4.7 25.8 6.3"/><path d="M7 6.6 L2.2 18 M7 6.6 L11.8 18"/><path d="M25.2 6.6 L20.4 18 M25.2 6.6 L30 18"/></g><circle cx="16.1" cy="1.9" r="1.9" fill="#44546F"/><path d="M0 17.6 H14 C14 20.8 10.8 22.9 7 22.9 C3.2 22.9 0 20.8 0 17.6 Z" fill="#44546F"/><path d="M18.2 17.6 H32.2 C32.2 20.8 29 22.9 25.2 22.9 C21.4 22.9 18.2 20.8 18.2 17.6 Z" fill="#44546F"/><path d="M10 28.4 C10 25.6 12.8 24.1 16.1 24.1 C19.4 24.1 22.4 25.6 22.4 28.4 Z" fill="#44546F"/></svg>
<span class="t " style="left:1999.2px;top:1561.7px;font-size:25.4px;line-height:32px;color:#253858;-webkit-text-stroke:0.40px #253858;">3</span>
<div class="b " style="left:2030.0px;top:1558.0px;width:70.0px;height:40.0px;background:#F1F2F4;border-radius:6px;"></div>
<span class="t " style="left:2038.8px;top:1561.7px;font-size:25.4px;line-height:32px;color:#253858;letter-spacing:-1.42px;-webkit-text-stroke:0.40px #253858;">SMB</span>
</div>
</section>
</main>
<aside id="panel">
<div class="b " style="left:2092.0px;top:122.0px;width:12.0px;height:1486.0px;background:linear-gradient(90deg,rgba(9,30,66,0),rgba(9,30,66,.045));"></div>
<div class="b " style="left:2104.0px;top:122.0px;width:800.0px;height:1486.0px;background:#fff;"></div>
<svg class="b" style="left:2134.0px;top:165.0px;" width="32.0" height="32.0" viewBox="0 0 32 32"><path d="M29 16 H4.4 M14.6 5 L3.6 16 L14.6 27" fill="none" stroke="#44546F" stroke-width="3.4" stroke-linecap="round" stroke-linejoin="round"/></svg>
<h2><span class="t " style="left:2181.0px;top:159.6px;font-size:33.6px;line-height:42px;color:#172B4D;letter-spacing:1.03px;-webkit-text-stroke:1.11px #172B4D;">All fields</span></h2>
<svg class="b" style="left:2832.0px;top:164.0px;" width="32.0" height="32.0" viewBox="0 0 32 32"><path d="M4 4 L28 28 M28 4 L4 28" fill="none" stroke="#44546F" stroke-width="3.6" stroke-linecap="round"/></svg>
<div class="b " style="left:2104.0px;top:232.0px;width:800.0px;height:4.0px;background:#DCDFE4;"></div>
<svg class="b" style="left:2142.6px;top:263.0px;" width="26.4" height="26.4" viewBox="0 0 32 32"><circle cx="16" cy="16" r="14" fill="none" stroke="#44546F" stroke-width="3.2"/><path d="M10.4 14 L16 19.4 L21.6 14" fill="none" stroke="#44546F" stroke-width="3.2" stroke-linecap="round" stroke-linejoin="round"/></svg>
<span class="t " style="left:2179.0px;top:261.1px;font-size:25.0px;line-height:31px;color:#44546F;letter-spacing:-0.03px;-webkit-text-stroke:0.45px #44546F;">Multi-select field</span>
<div class="b " style="left:2136.0px;top:304.5px;width:736.0px;height:79.0px;background:#FAFBFC;border-radius:8px;border:4px solid #DCDFE4;"></div>
<span class="t " style="left:2153.0px;top:326.0px;font-size:28.8px;line-height:36px;color:#172B4D;letter-spacing:-1.08px;">Goal</span>
<svg class="b" style="left:2144.6px;top:416.4px;" width="31.0" height="31.0" viewBox="0 0 31 31"><g fill="none" stroke="#44546F" stroke-width="3.2" stroke-linecap="round"><path d="M27.2 14.2 A12.2 12.2 0 1 1 16.6 4.6"/><path d="M9.4 19.2 C11.4 23.6 18.6 23.6 20.6 19.2"/><path d="M24.6 1.8 V9.4 M20.8 5.6 H28.4" stroke-width="2.8"/></g><circle cx="10.6" cy="13.2" r="2.2" fill="#44546F"/><circle cx="19" cy="13.2" r="2.2" fill="#44546F"/></svg>
<span class="t " style="left:2137.0px;top:482.1px;font-size:29.2px;line-height:36px;color:#172B4D;letter-spacing:0.12px;">The goals this idea helps the team achieve</span>
<span class="t " style="left:2137.0px;top:544.3px;font-size:24.6px;line-height:31px;color:#44546F;letter-spacing:-0.63px;-webkit-text-stroke:0.50px #44546F;">Options</span>
<span class="t " style="left:2718.8px;top:544.3px;font-size:24.6px;line-height:31px;color:#44546F;letter-spacing:-0.36px;-webkit-text-stroke:0.50px #44546F;">Add weighting</span>
<div class="b " style="left:2136.0px;top:592.5px;width:736.0px;height:67.0px;background:#fff;border-radius:10px;border:4px solid #DCDFE4;"></div>
<svg class="b" style="left:2157.6px;top:611.8px;" width="29.0" height="29.0" viewBox="0 0 29 29"><circle cx="12.2" cy="12.2" r="9.9" fill="none" stroke="#626F86" stroke-width="4.4"/><path d="M19.6 19.8 L26.2 26.2" stroke="#626F86" stroke-width="4.6" stroke-linecap="round"/></svg>
<span class="t " style="left:2201.0px;top:608.4px;font-size:29.2px;line-height:36px;color:#626F86;letter-spacing:0.02px;">Search options</span>
<div class="b " style="left:2104.0px;top:678.0px;width:800.0px;height:806.0px;background:#F4F5F7;"></div>
<div class="b " style="left:2136.0px;top:690.0px;width:180.0px;height:39.5px;background:#E9F2FF;border-radius:6px;"></div>
<span class="t " style="left:2145.0px;top:694.0px;font-size:25.0px;line-height:31px;color:#09326C;letter-spacing:0.21px;-webkit-text-stroke:0.83px #09326C;">Increase MAU</span>
<span class="t " style="left:2805.5px;top:691.5px;font-size:28.4px;line-height:36px;color:#44546F;letter-spacing:0.20px;-webkit-text-stroke:0.50px #44546F;">Done</span>
<div class="b " style="left:2136.0px;top:754.5px;width:736.0px;height:79.5px;background:#fff;border-radius:8px;border:4px solid #388BFF;"></div>
<span class="t " style="left:2152.4px;top:775.6px;font-size:29.4px;line-height:37px;color:#172B4D;letter-spacing:-0.42px;">Increase MAU</span>
<span class="t " style="left:2137.0px;top:857.3px;font-size:24.0px;line-height:30px;color:#44546F;letter-spacing:-1.00px;-webkit-text-stroke:0.50px #44546F;">Emoji</span>
<svg class="b" style="left:2140.4px;top:898.0px;" width="31.0" height="31.0" viewBox="0 0 31 31"><g fill="none" stroke="#44546F" stroke-width="3.2" stroke-linecap="round"><path d="M27.2 14.2 A12.2 12.2 0 1 1 16.6 4.6"/><path d="M9.4 19.2 C11.4 23.6 18.6 23.6 20.6 19.2"/><path d="M24.6 1.8 V9.4 M20.8 5.6 H28.4" stroke-width="2.8"/></g><circle cx="10.6" cy="13.2" r="2.2" fill="#44546F"/><circle cx="19" cy="13.2" r="2.2" fill="#44546F"/></svg>
<span class="t " style="left:2137.0px;top:964.6px;font-size:24.6px;line-height:31px;color:#44546F;letter-spacing:-0.80px;-webkit-text-stroke:0.50px #44546F;">Color</span>
<div class="b " style="left:2136.0px;top:1010.0px;width:60.0px;height:60.0px;background:#F1F2F4;border-radius:6px;"></div>
<div class="b " style="left:2220.0px;top:1010.0px;width:60.0px;height:60.0px;background:#E9F0FF;border-radius:6px;"></div>
<div class="b " style="left:2304.0px;top:1010.0px;width:60.0px;height:60.0px;background:#E6F7FD;border-radius:6px;"></div>
<div class="b " style="left:2388.0px;top:1010.0px;width:60.0px;height:60.0px;background:#E2F9EF;border-radius:6px;"></div>
<div class="b " style="left:2472.0px;top:1010.0px;width:60.0px;height:60.0px;background:#FDF4D6;border-radius:6px;"></div>
<div class="b " style="left:2556.0px;top:1010.0px;width:60.0px;height:60.0px;background:#FDF2E8;border-radius:6px;"></div>
<div class="b " style="left:2640.0px;top:1010.0px;width:60.0px;height:60.0px;background:#FBECEA;border-radius:6px;"></div>
<div class="b " style="left:2724.0px;top:1010.0px;width:60.0px;height:60.0px;background:#FBEBF6;border-radius:6px;"></div>
<div class="b " style="left:2808.0px;top:1010.0px;width:60.0px;height:60.0px;background:#F1F0FD;border-radius:6px;"></div>
<div class="b " style="left:2136.0px;top:1086.0px;width:60.0px;height:60.0px;background:#DADCE2;border-radius:6px;"></div>
<div class="b " style="left:2220.0px;top:1086.0px;width:60.0px;height:60.0px;background:#CFDDFA;border-radius:6px;"></div>
<div class="b " style="left:2304.0px;top:1086.0px;width:60.0px;height:60.0px;background:#B9EBF2;border-radius:6px;"></div>
<div class="b " style="left:2388.0px;top:1086.0px;width:60.0px;height:60.0px;background:#B8F0D8;border-radius:6px;"></div>
<div class="b " style="left:2472.0px;top:1086.0px;width:60.0px;height:60.0px;background:#FAE490;border-radius:6px;"></div>
<div class="b " style="left:2556.0px;top:1086.0px;width:60.0px;height:60.0px;background:#FBDCBC;border-radius:6px;"></div>
<div class="b " style="left:2640.0px;top:1086.0px;width:60.0px;height:60.0px;background:#F8D3CC;border-radius:6px;"></div>
<div class="b " style="left:2724.0px;top:1086.0px;width:60.0px;height:60.0px;background:#F4D2EA;border-radius:6px;"></div>
<div class="b " style="left:2808.0px;top:1086.0px;width:60.0px;height:60.0px;background:#DED7F9;border-radius:6px;"></div>
<div class="b " style="left:2136.0px;top:1162.0px;width:60.0px;height:60.0px;background:#B3B9C6;border-radius:6px;"></div>
<div class="b " style="left:2220.0px;top:1162.0px;width:60.0px;height:60.0px;background:#8FB7F7;border-radius:6px;"></div>
<div class="b " style="left:2304.0px;top:1162.0px;width:60.0px;height:60.0px;background:#8ED8E6;border-radius:6px;"></div>
<div class="b " style="left:2388.0px;top:1162.0px;width:60.0px;height:60.0px;background:#90DAB5;border-radius:6px;"></div>
<div class="b " style="left:2472.0px;top:1162.0px;width:60.0px;height:60.0px;background:#F9D15B;border-radius:6px;"></div>
<div class="b " style="left:2556.0px;top:1162.0px;width:60.0px;height:60.0px;background:#F6C081;border-radius:6px;"></div>
<div class="b " style="left:2640.0px;top:1162.0px;width:60.0px;height:60.0px;background:#F2A195;border-radius:6px;"></div>
<div class="b " style="left:2724.0px;top:1162.0px;width:60.0px;height:60.0px;background:#EA9BCF;border-radius:6px;"></div>
<div class="b " style="left:2808.0px;top:1162.0px;width:60.0px;height:60.0px;background:#B4ABF1;border-radius:6px;"></div>
<div class="b " style="left:2136.0px;top:1238.0px;width:60.0px;height:60.0px;background:#626F88;border-radius:6px;"></div>
<div class="b " style="left:2220.0px;top:1238.0px;width:60.0px;height:60.0px;background:#2A66DC;border-radius:6px;"></div>
<div class="b " style="left:2304.0px;top:1238.0px;width:60.0px;height:60.0px;background:#3C7D89;border-radius:6px;"></div>
<div class="b " style="left:2388.0px;top:1238.0px;width:60.0px;height:60.0px;background:#40835F;border-radius:6px;"></div>
<div class="b " style="left:2472.0px;top:1238.0px;width:60.0px;height:60.0px;background:#8F6E23;border-radius:6px;"></div>
<div class="b " style="left:2556.0px;top:1238.0px;width:60.0px;height:60.0px;background:#AC6023;border-radius:6px;"></div>
<div class="b " style="left:2640.0px;top:1238.0px;width:60.0px;height:60.0px;background:#BC3C2B;border-radius:6px;"></div>
<div class="b " style="left:2724.0px;top:1238.0px;width:60.0px;height:60.0px;background:#A04C87;border-radius:6px;"></div>
<div class="b " style="left:2808.0px;top:1238.0px;width:60.0px;height:60.0px;background:#6C5FC2;border-radius:6px;"></div>
<div class="b " style="left:2136.0px;top:1314.0px;width:60.0px;height:60.0px;background:#626F88;border-radius:6px;"></div>
<div class="b " style="left:2220.0px;top:1314.0px;width:60.0px;height:60.0px;background:#13326A;border-radius:6px;"></div>
<div class="b " style="left:2304.0px;top:1314.0px;width:60.0px;height:60.0px;background:#28474E;border-radius:6px;"></div>
<div class="b " style="left:2388.0px;top:1314.0px;width:60.0px;height:60.0px;background:#264A36;border-radius:6px;"></div>
<div class="b " style="left:2472.0px;top:1314.0px;width:60.0px;height:60.0px;background:#503F12;border-radius:6px;"></div>
<div class="b " style="left:2556.0px;top:1314.0px;width:60.0px;height:60.0px;background:#5B3919;border-radius:6px;"></div>
<div class="b " style="left:2640.0px;top:1314.0px;width:60.0px;height:60.0px;background:#5A201B;border-radius:6px;"></div>
<div class="b " style="left:2724.0px;top:1314.0px;width:60.0px;height:60.0px;background:#4B2740;border-radius:6px;"></div>
<div class="b " style="left:2808.0px;top:1314.0px;width:60.0px;height:60.0px;background:#322D62;border-radius:6px;"></div>
<svg class="b" style="left:2229.0px;top:1022.5px;" width="40.0" height="36.0" viewBox="0 0 40 36"><path d="M4.9 19.6 L14.2 27.6 L33.5 8.5" fill="none" stroke="#0C56C8" stroke-width="4.2" stroke-linecap="round" stroke-linejoin="round"/></svg>
<span class="t " style="left:2136.8px;top:1405.5px;font-size:23.0px;line-height:29px;color:#626F86;letter-spacing:0.20px;">Enable to highlight rows and cards with the selected color</span>
<div class="b " style="left:2808.0px;top:1406.0px;width:64.0px;height:32.0px;background:#05875B;border-radius:16px;"></div>
<div class="b " style="left:2844.0px;top:1410.0px;width:24.0px;height:24.0px;background:#fff;border-radius:12px;"></div>
<svg class="b" style="left:2815.0px;top:1413.0px;" width="20.0" height="18.0" viewBox="0 0 20 18"><path d="M4 9.6 L8.4 13.6 L15.6 4.8" fill="none" stroke="#fff" stroke-width="3.4" stroke-linecap="round" stroke-linejoin="round"/></svg>
<div class="b " style="left:2106.0px;top:1472.4px;width:796.0px;height:12.0px;background:#ECEEF2;border-radius:4px 4px 0 0;"></div>
<div class="b " style="left:2104.0px;top:1476.0px;width:800.0px;height:132.0px;background:#fff;border-radius:4px 4px 0 0;"></div>
<div class="b " style="left:2152.0px;top:1512.0px;width:178.0px;height:63.5px;background:#F4F5F7;border-radius:6px;"></div>
<svg class="b" style="left:2180.0px;top:1531.0px;" width="26.0" height="26.0" viewBox="0 0 26 26"><path d="M1.6 5.2 H24.4 V7.6 H1.6 Z" fill="#44546F"/><path d="M8.6 1.6 H17.4 V4 H8.6 Z" fill="#44546F"/><path d="M3.6 9.4 H22.4 L20.6 22.6 C20.4 24 19.4 25 18 25 H8 C6.6 25 5.6 24 5.4 22.6 Z" fill="#44546F"/></svg>
<span class="t " style="left:2226.8px;top:1524.9px;font-size:29.4px;line-height:37px;color:#44546F;letter-spacing:-0.04px;-webkit-text-stroke:0.50px #44546F;">Delete</span>
</aside>
<header>
<div class="b " style="left:24.0px;top:122.0px;width:2880.0px;height:11.0px;background:linear-gradient(180deg,rgba(9,30,66,.14),rgba(9,30,66,.05) 35%,rgba(9,30,66,0));"></div>
<div class="b " style="left:24.0px;top:7.0px;width:2880.0px;height:115.0px;background:#fff;"></div>
<div class="b " style="left:24.0px;top:121.4px;width:2880.0px;height:1.6px;background:#C8CED8;"></div>
<div class="b " style="left:68.0px;top:50.0px;width:8.0px;height:8.0px;background:#44546F;border-radius:2px;"></div>
<div class="b " style="left:80.0px;top:50.0px;width:8.0px;height:8.0px;background:#44546F;border-radius:2px;"></div>
<div class="b " style="left:92.0px;top:50.0px;width:8.0px;height:8.0px;background:#44546F;border-radius:2px;"></div>
<div class="b " style="left:68.0px;top:62.0px;width:8.0px;height:8.0px;background:#44546F;border-radius:2px;"></div>
<div class="b " style="left:80.0px;top:62.0px;width:8.0px;height:8.0px;background:#44546F;border-radius:2px;"></div>
<div class="b " style="left:92.0px;top:62.0px;width:8.0px;height:8.0px;background:#44546F;border-radius:2px;"></div>
<div class="b " style="left:68.0px;top:74.0px;width:8.0px;height:8.0px;background:#44546F;border-radius:2px;"></div>
<div class="b " style="left:80.0px;top:74.0px;width:8.0px;height:8.0px;background:#44546F;border-radius:2px;"></div>
<div class="b " style="left:92.0px;top:74.0px;width:8.0px;height:8.0px;background:#44546F;border-radius:2px;"></div>
<svg class="b" style="left:127.5px;top:46.0px;" width="39.5" height="38.5" viewBox="0 0 39.5 38.5"><defs><linearGradient id="jg" x1="1" y1="0" x2="0.35" y2="0.75"><stop offset="0.1" stop-color="#0052CC"/><stop offset="1" stop-color="#2684FF"/></linearGradient></defs><path d="M37.8 0 H18.8 C18.8 4.74 22.64 8.58 27.38 8.58 H30.88 V11.96 C30.88 16.7 34.72 20.54 39.46 20.54 V1.66 C39.46 0.74 38.72 0 37.8 0 Z" fill="#2684FF"/><path d="M28.4 9.46 H9.4 C9.4 14.2 13.24 18.04 17.98 18.04 H21.48 V21.42 C21.48 26.16 25.32 30 30.06 30 V11.12 C30.06 10.2 29.32 9.46 28.4 9.46 Z" fill="url(#jg)"/><path d="M19 18.92 H0 C0 23.66 3.84 27.5 8.58 27.5 H12.08 V30.88 C12.08 35.62 15.92 39.46 20.66 39.46 V20.58 C20.66 19.66 19.92 18.92 19 18.92 Z" fill="url(#jg)"/></svg>
<span class="t " style="left:176.5px;top:39.4px;font-size:43.5px;line-height:54px;color:#0E2859;letter-spacing:-1.37px;">Jira</span>
<nav>
<span class="t " style="left:307.0px;top:47.5px;font-size:29.4px;line-height:37px;color:#44546F;letter-spacing:0.36px;-webkit-text-stroke:0.50px #44546F;">Your work</span>
<svg class="b" style="left:452.0px;top:60.5px;" width="20.0" height="13.0" viewBox="-2 -2 20 13"><path d="M2.2 1.6 L8 7.2 L13.8 1.6" fill="none" stroke="#8590A2" stroke-width="4.2" stroke-linecap="round" stroke-linejoin="round"/></svg>
<span class="t " style="left:518.8px;top:47.5px;font-size:29.4px;line-height:37px;color:#44546F;letter-spacing:0.43px;-webkit-text-stroke:0.50px #44546F;">Projects</span>
<svg class="b" style="left:640.5px;top:60.5px;" width="20.0" height="13.0" viewBox="-2 -2 20 13"><path d="M2.2 1.6 L8 7.2 L13.8 1.6" fill="none" stroke="#8590A2" stroke-width="4.2" stroke-linecap="round" stroke-linejoin="round"/></svg>
<span class="t " style="left:707.0px;top:47.5px;font-size:29.4px;line-height:37px;color:#44546F;letter-spacing:0.29px;-webkit-text-stroke:0.50px #44546F;">Filters</span>
<svg class="b" style="left:801.2px;top:60.5px;" width="20.0" height="13.0" viewBox="-2 -2 20 13"><path d="M2.2 1.6 L8 7.2 L13.8 1.6" fill="none" stroke="#8590A2" stroke-width="4.2" stroke-linecap="round" stroke-linejoin="round"/></svg>
<span class="t " style="left:866.5px;top:47.5px;font-size:29.4px;line-height:37px;color:#44546F;letter-spacing:0.27px;-webkit-text-stroke:0.50px #44546F;">Dashboards</span>
<svg class="b" style="left:1040.0px;top:60.5px;" width="20.0" height="13.0" viewBox="-2 -2 20 13"><path d="M2.2 1.6 L8 7.2 L13.8 1.6" fill="none" stroke="#8590A2" stroke-width="4.2" stroke-linecap="round" stroke-linejoin="round"/></svg>
<span class="t " style="left:1107.0px;top:47.5px;font-size:29.4px;line-height:37px;color:#44546F;letter-spacing:-0.15px;-webkit-text-stroke:0.50px #44546F;">Teams</span>
<svg class="b" style="left:1205.5px;top:60.5px;" width="20.0" height="13.0" viewBox="-2 -2 20 13"><path d="M2.2 1.6 L8 7.2 L13.8 1.6" fill="none" stroke="#8590A2" stroke-width="4.2" stroke-linecap="round" stroke-linejoin="round"/></svg>
<span class="t " style="left:1270.6px;top:47.5px;font-size:29.4px;line-height:37px;color:#44546F;letter-spacing:-0.41px;-webkit-text-stroke:0.50px #44546F;">Plans</span>
<svg class="b" style="left:1355.0px;top:60.5px;" width="20.0" height="13.0" viewBox="-2 -2 20 13"><path d="M2.2 1.6 L8 7.2 L13.8 1.6" fill="none" stroke="#8590A2" stroke-width="4.2" stroke-linecap="round" stroke-linejoin="round"/></svg>
<span class="t " style="left:1421.0px;top:47.5px;font-size:29.4px;line-height:37px;color:#44546F;letter-spacing:0.16px;-webkit-text-stroke:0.50px #44546F;">Apps</span>
<svg class="b" style="left:1501.0px;top:60.5px;" width="20.0" height="13.0" viewBox="-2 -2 20 13"><path d="M2.2 1.6 L8 7.2 L13.8 1.6" fill="none" stroke="#8590A2" stroke-width="4.2" stroke-linecap="round" stroke-linejoin="round"/></svg>
</nav>
<div class="b " style="left:510.0px;top:116.0px;width:156.0px;height:6.0px;background:#0C5AD6;border-radius:3px 3px 0 0;"></div>
<div class="b " style="left:1566.0px;top:34.0px;width:140.0px;height:64.0px;background:#0C66E4;border-radius:6px;"></div>
<span class="t " style="left:1591.6px;top:47.5px;font-size:29.4px;line-height:37px;color:#fff;letter-spacing:0.03px;-webkit-text-stroke:0.50px #fff;">Create</span>
<div class="b " style="left:2032.0px;top:32.0px;width:480.0px;height:68.0px;background:#fff;border-radius:11px;border:4px solid #DCDFE4;"></div>
<svg class="b" style="left:2053.8px;top:52.2px;" width="29.0" height="29.0" viewBox="0 0 29 29"><circle cx="12.2" cy="12.2" r="9.9" fill="none" stroke="#626F86" stroke-width="4.4"/><path d="M19.6 19.8 L26.2 26.2" stroke="#626F86" stroke-width="4.6" stroke-linecap="round"/></svg>
<span class="t " style="left:2097.3px;top:46.5px;font-size:29.2px;line-height:36px;color:#626F86;letter-spacing:-0.26px;">Search</span>
<svg class="b" style="left:2540.0px;top:44.0px;" width="48.0" height="44.0" viewBox="2540 44 48 44"><g transform="translate(2557.3 72.65) rotate(45)" fill="#44546F"><path d="M-13.4 0 H13.4 C10.8 -3.6 10 -8 10 -15 C10 -24 5.6 -27.4 0 -27.4 C-5.6 -27.4 -10 -24 -10 -15 C-10 -8 -10.8 -3.6 -13.4 0 Z"/><circle cx="0" cy="-27.6" r="2.3"/><path d="M-3.7 1.9 A3.7 3.7 0 0 0 3.7 1.9 Z"/></g></svg>
<svg class="b" style="left:2624.2px;top:46.1px;" width="39.8" height="39.8" viewBox="0 0 40 40"><circle cx="20" cy="20" r="20" fill="#44546F"/><path d="M13.7 15.6 A6.3 6.3 0 1 1 22.8 20.9 C20.7 22.1 19.7 23.2 19.7 25.2 V26.4" fill="none" stroke="#fff" stroke-width="4.2" stroke-linecap="round"/><circle cx="19.7" cy="31.7" r="2.3" fill="#fff"/></svg>
<svg class="b" style="left:2705.1px;top:46.9px;" width="37.0" height="37.0" viewBox="-18.5 -18.5 37 37"><g fill="#44546F"><rect x="-3.7" y="-18.3" width="7.4" height="7" rx="1.8" transform="rotate(22.5)"/><rect x="-3.7" y="-18.3" width="7.4" height="7" rx="1.8" transform="rotate(67.5)"/><rect x="-3.7" y="-18.3" width="7.4" height="7" rx="1.8" transform="rotate(112.5)"/><rect x="-3.7" y="-18.3" width="7.4" height="7" rx="1.8" transform="rotate(157.5)"/><rect x="-3.7" y="-18.3" width="7.4" height="7" rx="1.8" transform="rotate(202.5)"/><rect x="-3.7" y="-18.3" width="7.4" height="7" rx="1.8" transform="rotate(247.5)"/><rect x="-3.7" y="-18.3" width="7.4" height="7" rx="1.8" transform="rotate(292.5)"/><rect x="-3.7" y="-18.3" width="7.4" height="7" rx="1.8" transform="rotate(337.5)"/></g><circle r="12.2" fill="none" stroke="#44546F" stroke-width="4.1"/></svg>
<svg class="b" style="left:2792.0px;top:34.0px;" width="64.0" height="64.0" viewBox="0 0 64 64"><defs><clipPath id="av"><circle cx="32" cy="32" r="32"/></clipPath></defs><g clip-path="url(#av)"><rect width="64" height="64" fill="#DAD3CB"/><path d="M32 0 C14 0 6 16 6 34 C6 48 8 58 12 66 L52 66 C57 56 59 46 58 32 C57 14 48 0 32 0Z" fill="#BF9C66"/><path d="M40 3 C52 9 58.5 24 57.5 40 C56.5 52 54 60 50 66 L43 66 C48 52 50.5 40 48.5 28 C47 18 44 9 40 3Z" fill="#D8C08C"/><path d="M13 30 C11 44 12 56 16 66 L24 66 C18 54 16 42 18 28Z" fill="#A9844F"/><path d="M21 52 L42 52 L45 66 L18 66Z" fill="#CF9770"/><path d="M31 11 C42 11 48.4 21 48.4 34 C48.4 48 40 58 31.5 60.5 C22 58 14.4 48 14.4 34 C14.4 21 20 11 31 11Z" fill="#DDA77F"/><path d="M14.6 44 C16.5 53 22 59.5 29 61.5 L21 66 L14 60Z" fill="#5E3D20" opacity=".75"/><path d="M33 5.5 C22 6.5 14.6 15 13.2 31 C17 21 24 15 32 13 C40 14 46.4 20 49.6 31 C48.6 16 43 6.5 33 5.5Z" fill="#C9AA74"/><path d="M33 5.5 L32 13" stroke="#A98853" stroke-width="1"/><path d="M18.6 27.2 C21 25.6 24.6 25.6 27 26.8 M36.4 26.8 C38.8 25.6 42.4 25.6 44.8 27.2" stroke="#A27E52" stroke-width="1.3" fill="none"/><ellipse cx="22.8" cy="30.2" rx="3.2" ry="1.5" fill="#5E4030"/><ellipse cx="40.4" cy="30.2" rx="3.2" ry="1.5" fill="#5E4030"/><path d="M29.6 32 C29 36 28.4 39 28.6 40.6 C30 41.8 33.4 41.8 34.8 40.6" fill="none" stroke="#C48D68" stroke-width="1.2"/><ellipse cx="21" cy="40" rx="4.4" ry="3" fill="#E79A8C" opacity=".35"/><ellipse cx="42" cy="40" rx="4.4" ry="3" fill="#E79A8C" opacity=".35"/><path d="M24.8 45.4 C28.6 47 35.4 47 39.2 45.4 C37 49.8 27 49.8 24.8 45.4 Z" fill="#F4E6DF" stroke="#BF6F62" stroke-width="1.1"/></g></svg>
</header>
</div></div></body></html>
